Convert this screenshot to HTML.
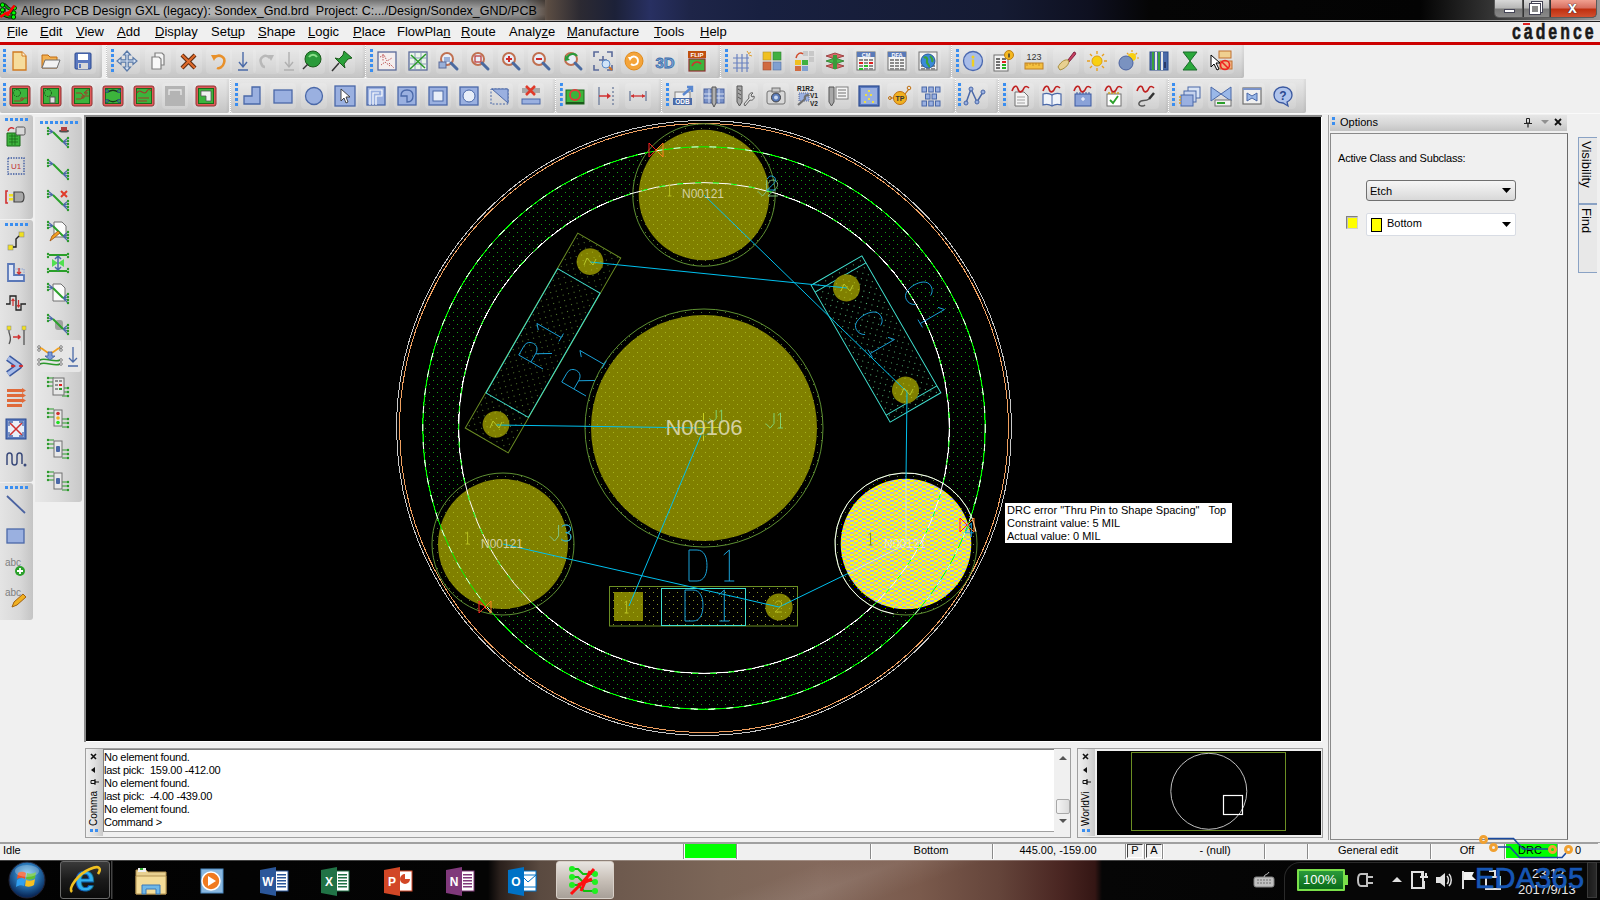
<!DOCTYPE html>
<html><head><meta charset="utf-8"><title>Allegro PCB Design</title>
<style>
*{margin:0;padding:0;box-sizing:border-box}
html,body{width:1600px;height:900px;overflow:hidden;background:#f0f0f0;font-family:"Liberation Sans",sans-serif;position:relative}
.a{position:absolute}
.t{position:absolute;white-space:nowrap;line-height:1}
.tb{position:absolute;border-radius:0 0 2px 2px;background:linear-gradient(#e8e8e8,#d8d8d8 50%,#c4c4c4);box-shadow:inset -2px 0 2px rgba(0,0,0,.05)}
.grip{position:absolute;width:3px;background:repeating-linear-gradient(#3a8ef0 0 3px,transparent 3px 5px)}
.griph{position:absolute;height:3px;background:repeating-linear-gradient(90deg,#3a8ef0 0 3px,transparent 3px 5px)}
.sep{position:absolute;width:1px;background:repeating-linear-gradient(#fff 0 1px,#c8c8c8 1px 2px)}
svg{position:absolute;overflow:visible}
</style></head><body>

<div class="a" style="left:0;top:0;width:1600px;height:21px;background:linear-gradient(90deg,#8a8a8a 0px,#a8a8a8 60px,#b4b4b4 200px,#aaaaaa 420px,#909090 525px,#5a4c42 548px,#2c2a32 580px,#1c2138 615px,#283062 650px,#1e2548 690px,#182040 760px,#151b33 1000px,#0e1020 1090px,#050505 1150px,#030303 1420px,#3a3a3a 1500px,#9a9a9a 1600px)"></div>
<div class="a" style="left:0;top:0;width:545px;height:21px;background:linear-gradient(rgba(0,0,0,.35),rgba(0,0,0,0) 40%,rgba(0,0,0,0) 70%,rgba(0,0,0,.3))"></div>
<div class="a" style="left:0;top:20px;width:1600px;height:1px;background:rgba(255,255,255,.55)"></div>
<div class="a" style="left:0;top:21px;width:1600px;height:1px;background:#1a1a1a"></div>
<div class="a" style="left:0;top:22px;width:1600px;height:20px;background:#f0f0f0"></div>
<div class="a" style="left:0;top:42px;width:1600px;height:3px;background:#cc0000"></div>
<div class="a" style="left:84px;top:115px;width:1238px;height:627px;background:#fff;border-top:2px solid #8a8a8a;border-left:2px solid #8a8a8a"></div>
<div class="a" style="left:86px;top:117px;width:1235px;height:624px;background:#000"></div>
<div class="a" style="left:0;top:860px;width:1600px;height:40px;background:linear-gradient(90deg,#020202 0,#040404 488px,#2a201c 500px,#5a4a40 540px,#6e5a4e 620px,#7c6658 720px,#84695c 820px,#7a5a4c 920px,#64443a 1000px,#4a2622 1060px,#341614 1095px,#060606 1102px,#020202 1600px)"></div>
<div class="a" style="left:0;top:860px;width:1600px;height:1px;background:rgba(255,255,255,.25)"></div>
<div class="a" style="left:500px;top:861px;width:700px;height:39px;background:linear-gradient(160deg,rgba(255,255,255,0) 40%,rgba(255,255,255,.08) 50%,rgba(255,255,255,0) 60%)"></div>
<div class="a" style="left:1284px;top:862px;width:316px;height:38px;border-radius:16px 0 0 0;background:#060606;border-top:1px solid #2a2a2a;border-left:1px solid #2a2a2a"></div>
<svg style="left:8px;top:861px" width="38" height="38" viewBox="0 0 38 38">
<defs><radialGradient id="orb" cx="50%" cy="35%" r="60%"><stop offset="0" stop-color="#7ac8f0"/><stop offset=".5" stop-color="#2a78b8"/><stop offset="1" stop-color="#0a2a5a"/></radialGradient></defs>
<circle cx="19" cy="19" r="18" fill="url(#orb)" stroke="#223" stroke-width="1"/>
<path d="M10 12 C13 10 16 11 18 12 L17 18 C15 17 12 16 9 18 Z" fill="#f05020"/>
<path d="M19 12 C22 13 25 13 28 11 L27 17 C24 19 21 19 18 18 Z" fill="#60c030"/>
<path d="M9 19 C12 17 15 18 17 19 L16 25 C14 24 11 24 8 26 Z" fill="#30a0f0"/>
<path d="M18 19 C21 20 24 20 27 18 L26 24 C23 26 20 26 17 25 Z" fill="#f8c020"/>
<ellipse cx="19" cy="10" rx="12" ry="6" fill="rgba(255,255,255,.25)"/>
</svg>
<div class="a" style="left:60px;top:861px;width:50px;height:38px;border:1px solid #6a6a6a;border-radius:3px;background:linear-gradient(#3a3a3a,#1a1a1a 50%,#0a0a0a)"></div>
<div class="a" style="left:111px;top:861px;width:2px;height:38px;border-left:1px solid #444;border-right:1px solid #222"></div>
<svg style="left:66px;top:862px" width="38" height="36" viewBox="0 0 38 36">
<text x="19" y="29" font-size="36" font-weight="bold" fill="#30b0f0" stroke="#0a5aa0" stroke-width=".8" text-anchor="middle" font-family="Liberation Sans">e</text>
<path d="M6 30 C2 26 12 12 24 7 C33 3 36 6 32 12" stroke="#f0c020" stroke-width="2.6" fill="none"/></svg>
<svg style="left:134px;top:866px" width="34" height="30" viewBox="0 0 34 30">
<path d="M2 4 H12 L14 6 H32 V28 H2 Z" fill="#e8d090" stroke="#b09050"/><rect x="4" y="2" width="8" height="4" fill="#f0f0f0"/><rect x="6" y="2" width="3" height="2" fill="#30b030"/><path d="M2 10 H32 V28 H2 Z" fill="#f4dc98" stroke="#b09050"/><path d="M8 28 V19 H26 V28 H22 V23 H12 V28 Z" fill="#70b8e8" stroke="#3a78b8"/></svg>
<svg style="left:197px;top:866px" width="30" height="30" viewBox="0 0 30 30">
<rect x="4" y="3" width="22" height="24" fill="#8ab8e0" stroke="#4a88c0"/><circle cx="14" cy="15" r="9" fill="#f07a20" stroke="#fff" stroke-width="1.5"/><path d="M11 10 L19 15 L11 20 Z" fill="#fff"/></svg>
<svg style="left:259px;top:866px" width="32" height="31" viewBox="0 0 32 31">
<rect x="12" y="5" width="17" height="20" fill="#fff" stroke="#2b579a"/><rect x="18" y="8" width="9" height="1.5" fill="#2b579a"/><rect x="18" y="11" width="9" height="1.5" fill="#2b579a"/><rect x="18" y="14" width="9" height="1.5" fill="#2b579a"/><rect x="18" y="17" width="9" height="1.5" fill="#2b579a"/><rect x="18" y="20" width="9" height="1.5" fill="#2b579a"/>
<path d="M1 4 L17 1 V30 L1 27 Z" fill="#2b579a"/><text x="9" y="20" font-size="12" font-weight="bold" fill="#fff" text-anchor="middle" font-family="Liberation Sans">W</text></svg>
<svg style="left:320px;top:866px" width="32" height="31" viewBox="0 0 32 31">
<rect x="12" y="5" width="17" height="20" fill="#fff" stroke="#217346"/><rect x="18" y="8" width="9" height="1.5" fill="#217346"/><rect x="18" y="11" width="9" height="1.5" fill="#217346"/><rect x="18" y="14" width="9" height="1.5" fill="#217346"/><rect x="18" y="17" width="9" height="1.5" fill="#217346"/><rect x="18" y="20" width="9" height="1.5" fill="#217346"/>
<path d="M1 4 L17 1 V30 L1 27 Z" fill="#217346"/><text x="9" y="20" font-size="12" font-weight="bold" fill="#fff" text-anchor="middle" font-family="Liberation Sans">X</text></svg>
<svg style="left:383px;top:866px" width="32" height="31" viewBox="0 0 32 31">
<rect x="12" y="5" width="17" height="20" fill="#fff" stroke="#d24726"/><path d="M22 8 A5 5 0 1 0 27 13 H22Z" fill="#d24726"/>
<path d="M1 4 L17 1 V30 L1 27 Z" fill="#d24726"/><text x="9" y="20" font-size="12" font-weight="bold" fill="#fff" text-anchor="middle" font-family="Liberation Sans">P</text></svg>
<svg style="left:445px;top:866px" width="32" height="31" viewBox="0 0 32 31">
<rect x="12" y="5" width="17" height="20" fill="#fff" stroke="#80397b"/><rect x="18" y="8" width="9" height="1.5" fill="#80397b"/><rect x="18" y="11" width="9" height="1.5" fill="#80397b"/><rect x="18" y="14" width="9" height="1.5" fill="#80397b"/><rect x="18" y="17" width="9" height="1.5" fill="#80397b"/><rect x="18" y="20" width="9" height="1.5" fill="#80397b"/>
<path d="M1 4 L17 1 V30 L1 27 Z" fill="#80397b"/><text x="9" y="20" font-size="12" font-weight="bold" fill="#fff" text-anchor="middle" font-family="Liberation Sans">N</text></svg>
<svg style="left:507px;top:866px" width="32" height="31" viewBox="0 0 32 31">
<rect x="12" y="5" width="17" height="20" fill="#fff" stroke="#0072c6"/><rect x="14" y="9" width="15" height="12" fill="#fff" stroke="#0072c6"/><path d="M14 9 L21 16 L29 9" stroke="#0072c6" fill="none"/>
<path d="M1 4 L17 1 V30 L1 27 Z" fill="#0072c6"/><text x="9" y="20" font-size="12" font-weight="bold" fill="#fff" text-anchor="middle" font-family="Liberation Sans">O</text></svg>
<div class="a" style="left:556px;top:861px;width:58px;height:38px;border:1px solid #d8d0c8;border-radius:3px;background:linear-gradient(#e8e4e0,#c8c0b8 50%,#a8a098)"></div>
<svg style="left:568px;top:865px" width="34" height="32" viewBox="0 0 34 32">
<path d="M3 4 H10 L15 9 H24 M3 12 H10 L14 16 H26 M3 20 H10 L16 26 H26 M20 9 L26 5" stroke="#10c010" stroke-width="2" fill="none"/>
<g fill="#20f020"><circle cx="4" cy="4" r="3"/><circle cx="4" cy="12" r="3"/><circle cx="4" cy="20" r="3"/><circle cx="27" cy="9" r="3"/><circle cx="27" cy="17" r="3"/><circle cx="27" cy="26" r="3"/></g>
<path d="M3 29 L14 18 L26 4 M10 20 L24 14 M13 26 L22 6" stroke="#ff1010" stroke-width="3" fill="none"/></svg>
<svg style="left:1253px;top:872px" width="22" height="16" viewBox="0 0 22 16"><rect x="1" y="5" width="20" height="10" rx="2" fill="#c0c0c0" stroke="#808080"/><path d="M4 8 H18 M4 11 H18" stroke="#707070" stroke-dasharray="2 1"/><path d="M11 5 C11 2 15 3 16 0" stroke="#c0c0c0" fill="none"/></svg>
<div class="a" style="left:1297px;top:869px;width:48px;height:22px;border:2px solid #7ae04a;background:linear-gradient(#2a9a3a,#0a6a1a);border-radius:1px"></div>
<div class="a" style="left:1345px;top:875px;width:3px;height:10px;background:#7ae04a"></div>
<div class="t" style="left:1303px;top:873px;font-size:13px;color:#fff">100%</div>
<svg style="left:1355px;top:871px" width="20" height="18" viewBox="0 0 20 18"><path d="M12 3 H6 C2 3 2 15 6 15 H12 Z M12 6 H18 M12 12 H18" stroke="#c0c0c0" stroke-width="2" fill="none"/></svg>
<svg style="left:1391px;top:875px" width="12" height="8" viewBox="0 0 12 8"><path d="M1 7 L6 2 L11 7 Z" fill="#e0e0e0"/></svg>
<svg style="left:1410px;top:869px" width="20" height="22" viewBox="0 0 20 22"><rect x="2" y="3" width="11" height="16" fill="none" stroke="#e0e0e0" stroke-width="2"/><path d="M10 8 H18 M12 4 V8 M16 4 V8 M14 12 V20" stroke="#e0e0e0" stroke-width="2"/></svg>
<svg style="left:1434px;top:870px" width="20" height="20" viewBox="0 0 20 20"><path d="M2 7 H6 L11 3 V17 L6 13 H2 Z" fill="#e0e0e0"/><path d="M13 6 C15 8 15 12 13 14 M15 4 C18 7 18 13 15 16" stroke="#e0e0e0" stroke-width="1.5" fill="none"/></svg>
<svg style="left:1460px;top:869px" width="20" height="22" viewBox="0 0 20 22"><path d="M3 2 V20" stroke="#e0e0e0" stroke-width="2"/><path d="M4 3 H14 L12 7 L16 11 H4 Z" fill="#f0f0f0"/></svg>
<svg style="left:1483px;top:869px" width="22" height="22" viewBox="0 0 22 22"><rect x="3" y="8" width="14" height="12" fill="none" stroke="#e0e0e0" stroke-width="2"/><path d="M6 2 H12 V8" stroke="#e0e0e0" stroke-width="2" fill="none"/></svg>
<div class="t" style="left:1532px;top:867px;font-size:13px;color:#e8e8e8">23:12</div>
<div class="t" style="left:1518px;top:883px;font-size:13px;color:#e8e8e8">2017/9/13</div>
<div class="a" style="left:1587px;top:862px;width:10px;height:36px;border:1px solid #3a3a3a;background:linear-gradient(90deg,#1a1a1a,#2a2a2a)"></div>
<div class="a" style="left:1328px;top:115px;width:1px;height:725px;background:#a0a0a0"></div>
<div class="a" style="left:1330px;top:115px;width:237px;height:16px;background:linear-gradient(#e6e6e6,#d8d8d8 50%,#c4c4c4)"></div>
<div class="a" style="left:1332px;top:117px;width:3px;height:3px;background:#3a8ef0"></div><div class="a" style="left:1332px;top:122px;width:3px;height:3px;background:#3a8ef0"></div>
<div class="t" style="left:1340px;top:117px;font-size:11px;color:#000">Options</div>
<svg style="left:1523px;top:117px" width="10" height="11" viewBox="0 0 10 11"><path d="M3.5 1.5 H6.5 V6 H3.5 Z" stroke="#222" stroke-width="1" fill="none"/><path d="M1 6.5 H9 M5 6.5 V10.5" stroke="#222" stroke-width="1.2" fill="none"/></svg>
<svg style="left:1540px;top:119px" width="10" height="6" viewBox="0 0 10 6"><path d="M1 1 H9 L5 5 Z" fill="#909090"/></svg>
<svg style="left:1553px;top:117px" width="10" height="10" viewBox="0 0 10 10"><path d="M2 2 L8 8 M8 2 L2 8" stroke="#111" stroke-width="1.8"/></svg>
<div class="a" style="left:1330px;top:133px;width:238px;height:707px;border:1px solid #8a8a8a;border-right-color:#6a6a6a;background:#f0f0f0"></div>
<div class="t" style="left:1338px;top:153px;font-size:11px;letter-spacing:-0.2px;color:#000">Active Class and Subclass:</div>
<div class="a" style="left:1366px;top:180px;width:150px;height:21px;border:1px solid #707070;border-radius:3px;background:linear-gradient(#f6f6f6,#e8e8e8 50%,#d8d8d8)"></div>
<div class="t" style="left:1370px;top:186px;font-size:11px;color:#000">Etch</div>
<svg style="left:1502px;top:188px" width="9" height="5" viewBox="0 0 9 5"><path d="M0 0 H9 L4.5 5 Z" fill="#000"/></svg>
<div class="a" style="left:1346px;top:216px;width:12px;height:13px;border:1px solid #808080;border-right-color:#d0d0d0;border-bottom-color:#d0d0d0;background:#ffff00;box-shadow:inset 1px 1px 0 #c0c0c0"></div>
<div class="a" style="left:1366px;top:213px;width:150px;height:23px;border:1px solid #d8dce4;border-radius:2px;background:#fff"></div>
<div class="a" style="left:1371px;top:218px;width:11px;height:14px;border:1px solid #000;background:#ffff00"></div>
<div class="t" style="left:1387px;top:218px;font-size:11px;color:#000">Bottom</div>
<svg style="left:1502px;top:222px" width="9" height="5" viewBox="0 0 9 5"><path d="M0 0 H9 L4.5 5 Z" fill="#000"/></svg>
<div class="a" style="left:1578px;top:137px;width:19px;height:136px;border:1px solid #8aa2c4;border-right:none;background:#e8e8e8"></div>
<div class="a" style="left:1578px;top:203px;width:19px;height:2px;background:#8aa2c4"></div>
<div class="t" style="left:1577px;top:141px;font-size:13px;color:#000;transform-origin:0 0;transform:translate(16px,0) rotate(90deg)">Visibility</div>
<div class="t" style="left:1577px;top:208px;font-size:13px;color:#000;transform-origin:0 0;transform:translate(16px,0) rotate(90deg)">Find</div>
<div class="a" style="left:85px;top:748px;width:986px;height:90px;border:1px solid #a0a0a0;background:#f0f0f0"></div>
<div class="a" style="left:86px;top:749px;width:17px;height:87px;background:linear-gradient(90deg,#f0f0f0,#e0e0e0 50%,#c8c8c8)"></div>
<svg style="left:88px;top:752px" width="12" height="84" viewBox="0 0 12 84"><path d="M3 2 L8 7 M8 2 L3 7" stroke="#111" stroke-width="1.6"/><path d="M7 15 V21 L3 18 Z" fill="#111"/><path d="M7 28.5 V31.5 H3 V28.5 Z M7 27 V33 M7 30 H11" stroke="#111" stroke-width="1" fill="none"/><rect x="2" y="77" width="3" height="3" fill="#3a8ef0"/><rect x="7" y="77" width="3" height="3" fill="#3a8ef0"/></svg>
<div class="t" style="left:89px;top:826px;font-size:10px;color:#000;transform-origin:0 0;transform:rotate(-90deg)">Comma</div>
<div class="a" style="left:103px;top:749px;width:951px;height:83px;background:#fff;border-top:1px solid #808080;border-left:1px solid #808080;border-bottom:1px solid #a0a0a0"></div>
<div class="t" style="left:104px;top:752px;font-size:11px;letter-spacing:-0.25px;color:#000">No element found.</div>
<div class="t" style="left:104px;top:765px;font-size:11px;letter-spacing:-0.25px;color:#000">last pick:&nbsp; 159.00 -412.00</div>
<div class="t" style="left:104px;top:778px;font-size:11px;letter-spacing:-0.25px;color:#000">No element found.</div>
<div class="t" style="left:104px;top:791px;font-size:11px;letter-spacing:-0.25px;color:#000">last pick:&nbsp; -4.00 -439.00</div>
<div class="t" style="left:104px;top:804px;font-size:11px;letter-spacing:-0.25px;color:#000">No element found.</div>
<div class="t" style="left:104px;top:817px;font-size:11px;letter-spacing:-0.25px;color:#000">Command &gt;</div>
<svg style="left:1056px;top:753px" width="14" height="76" viewBox="0 0 14 76"><path d="M3 7 L7 3 L11 7 Z" fill="#555"/><path d="M3 66 L7 70 L11 66 Z" fill="#555"/></svg>
<div class="a" style="left:1056px;top:799px;width:14px;height:15px;border:1px solid #a8a8a8;border-radius:2px;background:linear-gradient(90deg,#f4f4f4,#dcdcdc)"></div>
<div class="a" style="left:1077px;top:748px;width:246px;height:90px;border:1px solid #a0a0a0;background:#f0f0f0"></div>
<div class="a" style="left:1078px;top:749px;width:17px;height:87px;background:linear-gradient(90deg,#f0f0f0,#e0e0e0 50%,#c8c8c8)"></div>
<svg style="left:1080px;top:752px" width="12" height="84" viewBox="0 0 12 84"><path d="M3 2 L8 7 M8 2 L3 7" stroke="#111" stroke-width="1.6"/><path d="M7 15 V21 L3 18 Z" fill="#111"/><path d="M7 28.5 V31.5 H3 V28.5 Z M7 27 V33 M7 30 H11" stroke="#111" stroke-width="1" fill="none"/><rect x="2" y="77" width="3" height="3" fill="#3a8ef0"/><rect x="7" y="77" width="3" height="3" fill="#3a8ef0"/></svg>
<div class="t" style="left:1081px;top:826px;font-size:10px;color:#000;transform-origin:0 0;transform:rotate(-90deg)">WorldVi</div>
<svg style="left:1097px;top:751px" width="224" height="84" viewBox="1097 751 224 84"><rect x="1097" y="751" width="224" height="84" fill="#000"/><rect x="1131.5" y="752.5" width="154" height="78" fill="none" stroke="#6b8e23"/><circle cx="1208.8" cy="791.3" r="38" fill="none" stroke="#c0c0c0"/><rect x="1223.5" y="795.5" width="19" height="19" fill="none" stroke="#fff" stroke-width="1.2"/></svg>
<div class="a" style="left:0;top:842px;width:1600px;height:1px;background:#a0a0a0"></div>
<div class="a" style="left:0;top:843px;width:1600px;height:17px;background:#f0f0f0"></div>
<div class="a" style="left:683px;top:844px;width:2px;height:15px;border-left:1px solid #8a8a8a;border-right:1px solid #fff"></div>
<div class="a" style="left:736px;top:844px;width:2px;height:15px;border-left:1px solid #8a8a8a;border-right:1px solid #fff"></div>
<div class="a" style="left:870px;top:844px;width:2px;height:15px;border-left:1px solid #8a8a8a;border-right:1px solid #fff"></div>
<div class="a" style="left:992px;top:844px;width:2px;height:15px;border-left:1px solid #8a8a8a;border-right:1px solid #fff"></div>
<div class="a" style="left:1125px;top:844px;width:2px;height:15px;border-left:1px solid #8a8a8a;border-right:1px solid #fff"></div>
<div class="a" style="left:1144px;top:844px;width:2px;height:15px;border-left:1px solid #8a8a8a;border-right:1px solid #fff"></div>
<div class="a" style="left:1162px;top:844px;width:2px;height:15px;border-left:1px solid #8a8a8a;border-right:1px solid #fff"></div>
<div class="a" style="left:1264px;top:844px;width:2px;height:15px;border-left:1px solid #8a8a8a;border-right:1px solid #fff"></div>
<div class="a" style="left:1307px;top:844px;width:2px;height:15px;border-left:1px solid #8a8a8a;border-right:1px solid #fff"></div>
<div class="a" style="left:1430px;top:844px;width:2px;height:15px;border-left:1px solid #8a8a8a;border-right:1px solid #fff"></div>
<div class="a" style="left:1504px;top:844px;width:2px;height:15px;border-left:1px solid #8a8a8a;border-right:1px solid #fff"></div>
<div class="a" style="left:1557px;top:844px;width:2px;height:15px;border-left:1px solid #8a8a8a;border-right:1px solid #fff"></div>
<div class="a" style="left:0;top:843px;width:1598px;height:1px;background:#a0a0a0"></div>
<div class="a" style="left:685px;top:844px;width:51px;height:14px;background:#00ff00"></div>
<div class="a" style="left:1506px;top:844px;width:51px;height:14px;background:#00ff00"></div>
<div class="a" style="left:1127px;top:844px;width:16px;height:14px;border:1px solid #404040;border-right-color:#fff;border-bottom-color:#fff"></div>
<div class="a" style="left:1146px;top:844px;width:16px;height:14px;border:1px solid #404040;border-right-color:#fff;border-bottom-color:#fff"></div>
<div class="t" style="left:3px;top:845px;font-size:11px;color:#000">Idle</div>
<div class="t" style="left:831px;width:200px;text-align:center;top:845px;font-size:11px;color:#000">Bottom</div>
<div class="t" style="left:958px;width:200px;text-align:center;top:845px;font-size:11px;color:#000">445.00, -159.00</div>
<div class="t" style="left:1035px;width:200px;text-align:center;top:845px;font-size:11px;color:#000">P</div>
<div class="t" style="left:1054px;width:200px;text-align:center;top:845px;font-size:11px;color:#000">A</div>
<div class="t" style="left:1115px;width:200px;text-align:center;top:845px;font-size:11px;color:#000">- (null)</div>
<div class="t" style="left:1268px;width:200px;text-align:center;top:845px;font-size:11px;color:#000">General edit</div>
<div class="t" style="left:1367px;width:200px;text-align:center;top:845px;font-size:11px;color:#000">Off</div>
<div class="t" style="left:1430px;width:200px;text-align:center;top:845px;font-size:11px;color:#000">DRC</div>
<div class="t" style="left:1575px;top:845px;font-size:11px;color:#000">0</div>
<svg style="left:0;top:1px" width="20" height="19" viewBox="0 0 20 19">
<path d="M2.5 4 H5 L8 7 L10 8 M2.5 9 H6 M2 13 L6 15 L9 16 H13.5 M14 7 L11 9 M13 12 H10" stroke="#000" stroke-width="3" fill="none"/>
<path d="M2.5 4 H5 L8 7 L10 8 M2.5 9 H6 M2 13 L6 15 L9 16 H13.5 M14 7 L11 9 M13 12 H10" stroke="#00b000" stroke-width="1.6" fill="none"/>
<g fill="#00ff00" stroke="#003000" stroke-width="1"><circle cx="2.5" cy="4" r="2.2"/><circle cx="2.5" cy="9" r="2.2"/><circle cx="2.5" cy="13" r="2"/><circle cx="14.5" cy="7" r="2"/><circle cx="13.8" cy="12" r="2.2"/><circle cx="13.5" cy="16" r="2.2"/></g>
<path d="M0.5 16 C3 14 5 12 8 11.5 L10 11 M7 15 C9 11 12 8 14.5 4.5" stroke="#ff0000" stroke-width="2.6" fill="none"/>
</svg>
<div class="t" style="left:21px;top:5px;font-size:12.5px;color:#000;letter-spacing:0px" id="ttl">Allegro PCB Design GXL (legacy): Sondex_Gnd.brd &nbsp;Project: C:.../Design/Sondex_GND/PCB</div>
<div class="a" style="left:1494px;top:0;width:103px;height:18px;border:1px solid #5a5a5a;border-top:none;border-radius:0 0 5px 5px;overflow:hidden;background:#333">
<div class="a" style="left:0;top:0;width:28px;height:17px;background:linear-gradient(#d8d8d8,#b8b8b8 45%,#7a7a7a 55%,#8a8a8a);border-right:1px solid #555"></div>
<div class="a" style="left:29px;top:0;width:26px;height:17px;background:linear-gradient(#d8d8d8,#b8b8b8 45%,#7a7a7a 55%,#8a8a8a);border-right:1px solid #555"></div>
<div class="a" style="left:56px;top:0;width:47px;height:17px;background:linear-gradient(#f0a090,#d87060 45%,#c03010 55%,#d05030)"></div>
<div class="a" style="left:9px;top:9px;width:11px;height:4px;background:#fff;border:1px solid #445"></div>
<div class="a" style="left:37px;top:2px;width:10px;height:10px;border:2px solid #fff;outline:1px solid #445"></div>
<div class="a" style="left:35px;top:4px;width:10px;height:10px;border:2px solid #fff;background:#888;outline:1px solid #445"></div>
<div class="t" style="left:73px;top:0px;font-size:16px;font-weight:bold;color:#fff;text-shadow:0 0 1px #223,0 0 1px #223">x</div>
</div>
<div class="t" style="left:7px;top:25px;font-size:13px;color:#000"><u>F</u>ile</div>
<div class="t" style="left:40px;top:25px;font-size:13px;color:#000"><u>E</u>dit</div>
<div class="t" style="left:76px;top:25px;font-size:13px;color:#000"><u>V</u>iew</div>
<div class="t" style="left:117px;top:25px;font-size:13px;color:#000"><u>A</u>dd</div>
<div class="t" style="left:155px;top:25px;font-size:13px;color:#000"><u>D</u>isplay</div>
<div class="t" style="left:211px;top:25px;font-size:13px;color:#000">Set<u>u</u>p</div>
<div class="t" style="left:258px;top:25px;font-size:13px;color:#000"><u>S</u>hape</div>
<div class="t" style="left:308px;top:25px;font-size:13px;color:#000"><u>L</u>ogic</div>
<div class="t" style="left:353px;top:25px;font-size:13px;color:#000"><u>P</u>lace</div>
<div class="t" style="left:397px;top:25px;font-size:13px;color:#000">FlowPla<u>n</u></div>
<div class="t" style="left:461px;top:25px;font-size:13px;color:#000"><u>R</u>oute</div>
<div class="t" style="left:509px;top:25px;font-size:13px;color:#000">Analy<u>z</u>e</div>
<div class="t" style="left:567px;top:25px;font-size:13px;color:#000"><u>M</u>anufacture</div>
<div class="t" style="left:654px;top:25px;font-size:13px;color:#000"><u>T</u>ools</div>
<div class="t" style="left:700px;top:25px;font-size:13px;color:#000"><u>H</u>elp</div>
<div class="t" style="left:1512px;top:21px;font-size:22px;font-weight:bold;color:#1a1a1a;letter-spacing:4.2px;-webkit-text-stroke:0.6px #1a1a1a;transform-origin:0 0;transform:scaleX(0.72)">cadence</div>
<div class="a" style="left:1523px;top:23px;width:7px;height:2px;background:#e02020"></div>
<div class="tb" style="left:0px;top:45px;width:102px;height:33px"></div>
<div class="grip" style="left:3px;top:49px;height:23px"></div>
<div class="a" style="left:6px;top:48px;width:26px;height:26px;border-radius:4px;background:rgba(255,255,255,.14)"></div>
<svg style="left:7.0px;top:49.0px" width="24" height="24" viewBox="0 0 24 24"><path d="M6 3 H15 L19 7 V21 H6 Z" fill="#f6dc9c" stroke="#d07a20" stroke-width="1.3"/><path d="M15 3 V7 H19" fill="#fff4d8" stroke="#d07a20"/></svg>
<div class="a" style="left:38px;top:48px;width:26px;height:26px;border-radius:4px;background:rgba(255,255,255,.14)"></div>
<svg style="left:39.0px;top:49.0px" width="24" height="24" viewBox="0 0 24 24"><path d="M3 6 H9 L11 8 H18 V19 H3 Z" fill="#f3b050" stroke="#c06a10"/><path d="M6 11 H21 L18 19 H3 Z" fill="#f2f2f2" stroke="#707070"/></svg>
<div class="a" style="left:70px;top:48px;width:26px;height:26px;border-radius:4px;background:rgba(255,255,255,.14)"></div>
<svg style="left:71.0px;top:49.0px" width="24" height="24" viewBox="0 0 24 24"><rect x="4" y="4" width="16" height="16" rx="1" fill="#5a78c0" stroke="#2a4890"/><rect x="7" y="5" width="10" height="6" fill="#fff"/><rect x="7" y="14" width="10" height="6" fill="#d8d8d8"/><rect x="8" y="15" width="2" height="4" fill="#5a78c0"/></svg>
<div class="tb" style="left:107px;top:45px;width:258px;height:33px"></div>
<div class="grip" style="left:111px;top:49px;height:23px"></div>
<div class="sep" style="left:106px;top:45px;height:33px"></div>
<div class="a" style="left:114px;top:48px;width:26px;height:26px;border-radius:4px;background:rgba(255,255,255,.14)"></div>
<svg style="left:115.0px;top:49.0px" width="24" height="24" viewBox="0 0 24 24"><path d="M12 2 L15.5 6 H13.2 V10.8 H18 V8.5 L22 12 L18 15.5 V13.2 H13.2 V18 H15.5 L12 22 L8.5 18 H10.8 V13.2 H6 V15.5 L2 12 L6 8.5 V10.8 H10.8 V6 H8.5 Z" fill="#d8e4f4" stroke="#5a7aa8" stroke-width="1.2"/></svg>
<div class="a" style="left:145px;top:48px;width:26px;height:26px;border-radius:4px;background:rgba(255,255,255,.14)"></div>
<svg style="left:146.0px;top:49.0px" width="24" height="24" viewBox="0 0 24 24"><path d="M9 4 H16 L18 6 V16 H9 Z" fill="#f4f4f4" stroke="#808080" stroke-width="1.2"/><path d="M6 8 H13 L15 10 V20 H6 Z" fill="#f8f8f8" stroke="#808080" stroke-width="1.2"/></svg>
<div class="a" style="left:176px;top:48px;width:26px;height:26px;border-radius:4px;background:rgba(255,255,255,.14)"></div>
<svg style="left:177.0px;top:49.0px" width="24" height="24" viewBox="0 0 24 24"><path d="M5 6 L18 19 M18 6 L5 19" stroke="#5a2a10" stroke-width="4.2"/><path d="M5 6 L18 19 M18 6 L5 19" stroke="#e06a2a" stroke-width="2.2"/></svg>
<div class="a" style="left:206px;top:48px;width:26px;height:26px;border-radius:4px;background:rgba(255,255,255,.14)"></div>
<svg style="left:207.0px;top:49.0px" width="24" height="24" viewBox="0 0 24 24"><path d="M7 9 C12 4 19 8 17 14 C16 18 12 20 10 19" stroke="#e8902a" stroke-width="2.5" fill="none"/><path d="M4 6 L10 6 L7 12 Z" fill="#e8902a"/></svg>
<div class="a" style="left:230px;top:48px;width:26px;height:26px;border-radius:4px;background:rgba(255,255,255,.14)"></div>
<svg style="left:231.0px;top:49.0px" width="24" height="24" viewBox="0 0 24 24"><path d="M12 3 V17 M8 13 L12 18 L16 13 M7 21 H17" stroke="#4a6aa8" stroke-width="1.4" fill="none"/></svg>
<div class="a" style="left:253px;top:48px;width:26px;height:26px;border-radius:4px;background:rgba(255,255,255,.14)"></div>
<svg style="left:254.0px;top:49.0px" width="24" height="24" viewBox="0 0 24 24"><path d="M16 9 C11 4 5 9 7 14 C8 17 10 18 11 18" stroke="#b8b8b8" stroke-width="2.5" fill="none"/><path d="M20 6 L14 6 L17 12 Z" fill="#b8b8b8"/></svg>
<div class="a" style="left:276px;top:48px;width:26px;height:26px;border-radius:4px;background:rgba(255,255,255,.14)"></div>
<svg style="left:277.0px;top:49.0px" width="24" height="24" viewBox="0 0 24 24"><path d="M12 3 V17 M8 13 L12 18 L16 13 M7 21 H17" stroke="#b0b0b0" stroke-width="1.4" fill="none"/></svg>
<div class="a" style="left:299px;top:48px;width:26px;height:26px;border-radius:4px;background:rgba(255,255,255,.14)"></div>
<svg style="left:300.0px;top:49.0px" width="24" height="24" viewBox="0 0 24 24"><circle cx="13" cy="10" r="8" fill="#2a9a3a" stroke="#1a5a1a"/><path d="M9 8 C11 5 15 5 17 8" stroke="#8ae08a" stroke-width="2" fill="none"/><path d="M8 15 L3 20" stroke="#333" stroke-width="1.5"/></svg>
<div class="a" style="left:329px;top:48px;width:26px;height:26px;border-radius:4px;background:rgba(255,255,255,.14)"></div>
<svg style="left:330.0px;top:49.0px" width="24" height="24" viewBox="0 0 24 24"><path d="M14 2 L22 9 L18 10 L14 15 L15 19 L5 9 L9 10 L13 6 Z" fill="#2aa23a" stroke="#1a5a1a"/><path d="M9 14 L2 22" stroke="#333" stroke-width="1.5"/></svg>
<div class="tb" style="left:366px;top:45px;width:354px;height:33px"></div>
<div class="grip" style="left:370px;top:49px;height:23px"></div>
<div class="sep" style="left:365px;top:45px;height:33px"></div>
<div class="a" style="left:374px;top:48px;width:26px;height:26px;border-radius:4px;background:rgba(255,255,255,.14)"></div>
<svg style="left:375.0px;top:49.0px" width="24" height="24" viewBox="0 0 24 24"><rect x="3" y="3" width="18" height="18" fill="#f4eeee" stroke="#5a6a9a" stroke-width="1.3"/><path d="M5 8 L9 6 L12 12 L17 9 M6 16 L10 13 L15 17 M8 5 V12 M14 14 L19 19" fill="none" stroke="#c05a5a" stroke-width="1" stroke-dasharray="1.5 1"/></svg>
<div class="a" style="left:405px;top:48px;width:26px;height:26px;border-radius:4px;background:rgba(255,255,255,.14)"></div>
<svg style="left:406.0px;top:49.0px" width="24" height="24" viewBox="0 0 24 24"><rect x="3" y="3" width="18" height="18" fill="#eaf4ea" stroke="#5a6a9a" stroke-width="1.3"/><path d="M3 9 H21 M3 15 H21 M9 3 V21 M15 3 V21" stroke="#8a9ab8"/><path d="M4 20 L20 5 M5 6 L19 19" stroke="#2a9a2a" stroke-width="1.5"/></svg>
<div class="a" style="left:436px;top:48px;width:26px;height:26px;border-radius:4px;background:rgba(255,255,255,.14)"></div>
<svg style="left:437.0px;top:49.0px" width="24" height="24" viewBox="0 0 24 24"><circle cx="10" cy="10" r="6" fill="#e8eef8" stroke="#c07050" stroke-width="2"/><rect x="7" y="8" width="6" height="5" fill="#9ab0d8"/><path d="M14 14 L20 20" stroke="#4a6aa0" stroke-width="3" stroke-linecap="round"/><rect x="2" y="13" width="7" height="6" fill="#9ab0d8" stroke="#5a6a9a"/></svg>
<div class="a" style="left:467px;top:48px;width:26px;height:26px;border-radius:4px;background:rgba(255,255,255,.14)"></div>
<svg style="left:468.0px;top:49.0px" width="24" height="24" viewBox="0 0 24 24"><circle cx="10" cy="10" r="6" fill="#e8eef8" stroke="#c07050" stroke-width="2"/><rect x="7" y="7" width="6" height="6" fill="none" stroke="#c04040" stroke-width="1.3"/><path d="M14 14 L20 20" stroke="#4a6aa0" stroke-width="3" stroke-linecap="round"/></svg>
<div class="a" style="left:498px;top:48px;width:26px;height:26px;border-radius:4px;background:rgba(255,255,255,.14)"></div>
<svg style="left:499.0px;top:49.0px" width="24" height="24" viewBox="0 0 24 24"><circle cx="10" cy="10" r="6" fill="#e8eef8" stroke="#c07050" stroke-width="2"/><path d="M7 10 H13 M10 7 V13" stroke="#d02a2a" stroke-width="2"/><path d="M14 14 L20 20" stroke="#4a6aa0" stroke-width="3" stroke-linecap="round"/></svg>
<div class="a" style="left:528px;top:48px;width:26px;height:26px;border-radius:4px;background:rgba(255,255,255,.14)"></div>
<svg style="left:529.0px;top:49.0px" width="24" height="24" viewBox="0 0 24 24"><circle cx="10" cy="10" r="6" fill="#e8eef8" stroke="#c07050" stroke-width="2"/><path d="M7 10 H13" stroke="#d02a2a" stroke-width="2"/><path d="M14 14 L20 20" stroke="#4a6aa0" stroke-width="3" stroke-linecap="round"/></svg>
<div class="a" style="left:560px;top:48px;width:26px;height:26px;border-radius:4px;background:rgba(255,255,255,.14)"></div>
<svg style="left:561.0px;top:49.0px" width="24" height="24" viewBox="0 0 24 24"><circle cx="10" cy="10" r="6" fill="#e8eef8" stroke="#c07050" stroke-width="2"/><path d="M6 9 C8 4 14 4 16 7" stroke="#2a9a3a" stroke-width="2.2" fill="none"/><path d="M4 6 L9 11 L4 12Z" fill="#2a9a3a"/><path d="M14 14 L20 20" stroke="#4a6aa0" stroke-width="3" stroke-linecap="round"/></svg>
<div class="a" style="left:590px;top:48px;width:26px;height:26px;border-radius:4px;background:rgba(255,255,255,.14)"></div>
<svg style="left:591.0px;top:49.0px" width="24" height="24" viewBox="0 0 24 24"><path d="M3 8 V3 H8 M16 3 H21 V8 M21 16 V21 H16 M8 21 H3 V16" stroke="#5a6a9a" stroke-width="1.6" fill="none"/><path d="M12 7 V15 M8 11 H16" stroke="#5a6a9a" stroke-width="1.6"/><circle cx="15" cy="15" r="4" fill="#d0e4f8" stroke="#5a8ac8"/><path d="M18 18 L21 21" stroke="#d07020" stroke-width="2"/></svg>
<div class="a" style="left:621px;top:48px;width:26px;height:26px;border-radius:4px;background:rgba(255,255,255,.14)"></div>
<svg style="left:622.0px;top:49.0px" width="24" height="24" viewBox="0 0 24 24"><circle cx="12" cy="12" r="9" fill="#f4a43a" stroke="#e08a1a"/><path d="M8 10 C10 6 16 7 16 12 C16 16 11 17 9 15" stroke="#fff" stroke-width="1.8" fill="none"/><path d="M6 8 L10 8 L8 12Z" fill="#fff"/></svg>
<div class="a" style="left:652px;top:48px;width:26px;height:26px;border-radius:4px;background:rgba(255,255,255,.14)"></div>
<svg style="left:653.0px;top:49.0px" width="24" height="24" viewBox="0 0 24 24"><text x="12" y="19" font-size="15" font-weight="bold" fill="#7aa8d8" stroke="#3a6aa8" stroke-width="0.8" text-anchor="middle" font-family="Liberation Sans">3D</text></svg>
<div class="a" style="left:684px;top:48px;width:26px;height:26px;border-radius:4px;background:rgba(255,255,255,.14)"></div>
<svg style="left:685.0px;top:49.0px" width="24" height="24" viewBox="0 0 24 24"><rect x="3" y="2" width="18" height="7" fill="#c05010"/><text x="12" y="8" font-size="6" font-weight="bold" fill="#fff" text-anchor="middle" font-family="Liberation Sans">FLIP</text><rect x="4" y="10" width="16" height="12" fill="#3cb43c" stroke="#903030" stroke-width="1.2"/><path d="M7 17 C9 12 14 12 16 15" stroke="#d03030" stroke-width="1.5" fill="none"/></svg>
<div class="tb" style="left:721px;top:45px;width:230px;height:33px"></div>
<div class="grip" style="left:725px;top:49px;height:23px"></div>
<div class="sep" style="left:720px;top:45px;height:33px"></div>
<div class="a" style="left:728px;top:48px;width:26px;height:26px;border-radius:4px;background:rgba(255,255,255,.14)"></div>
<svg style="left:729.0px;top:49.0px" width="24" height="24" viewBox="0 0 24 24"><path d="M4 9 H20 M4 14 H20 M4 19 H20 M8 5 V23 M13 5 V23 M18 5 V23" stroke="#6a82c0" stroke-width="1.2"/><path d="M18 2 L20 5 M22 3 L19 5 M23 7 L20 6" stroke="#e0a030"/></svg>
<div class="a" style="left:759px;top:48px;width:26px;height:26px;border-radius:4px;background:rgba(255,255,255,.14)"></div>
<svg style="left:760.0px;top:49.0px" width="24" height="24" viewBox="0 0 24 24"><rect x="3" y="3" width="8" height="8" fill="#f0c020" stroke="#b09030" stroke-width=".6"/><rect x="13" y="3" width="8" height="8" fill="#40b040" stroke="#308030" stroke-width=".6"/><rect x="3" y="13" width="8" height="8" fill="#d06a40" stroke="#a04a30" stroke-width=".6"/><rect x="13" y="13" width="8" height="8" fill="#80a0d0" stroke="#5070a0" stroke-width=".6"/></svg>
<div class="a" style="left:790px;top:48px;width:26px;height:26px;border-radius:4px;background:rgba(255,255,255,.14)"></div>
<svg style="left:791.0px;top:49.0px" width="24" height="24" viewBox="0 0 24 24"><rect x="12" y="2" width="5" height="5" fill="#c8c8c8"/><rect x="18" y="2" width="5" height="5" fill="#c8c8c8"/><rect x="18" y="8" width="5" height="5" fill="#c8c8c8"/><rect x="4" y="11" width="6" height="5" fill="#f0c020"/><rect x="11" y="11" width="6" height="5" fill="#40b040"/><rect x="4" y="17" width="6" height="5" fill="#d06a40"/><rect x="11" y="17" width="6" height="5" fill="#80a0d0"/><path d="M5 9 C6 4 10 3 12 5" stroke="#d04a2a" stroke-width="1.5" fill="none"/></svg>
<div class="a" style="left:822px;top:48px;width:26px;height:26px;border-radius:4px;background:rgba(255,255,255,.14)"></div>
<svg style="left:823.0px;top:49.0px" width="24" height="24" viewBox="0 0 24 24"><path d="M3 7 L12 4 L21 7 L12 10Z" fill="#d86a6a" stroke="#903030" stroke-width=".8"/><path d="M3 12 L12 9 L21 12 L12 15Z" fill="#4ab84a" stroke="#2a7a2a" stroke-width=".8"/><path d="M3 17 L12 14 L21 17 L12 20Z" fill="#d86a6a" stroke="#903030" stroke-width=".8"/><rect x="10" y="6" width="4" height="14" fill="#3a9a3a"/></svg>
<div class="a" style="left:853px;top:48px;width:26px;height:26px;border-radius:4px;background:rgba(255,255,255,.14)"></div>
<svg style="left:854.0px;top:49.0px" width="24" height="24" viewBox="0 0 24 24"><rect x="3" y="3" width="18" height="18" fill="#f4f4f4" stroke="#707070"/><rect x="3" y="3" width="18" height="5" fill="#5a7ab8"/><text x="12" y="7.6" font-size="5.5" font-weight="bold" fill="#fff" text-anchor="middle" font-family="Liberation Sans">CM</text><rect x="5" y="10" width="4" height="2" fill="#8a8a8a"/><rect x="10" y="10" width="4" height="2" fill="#8a8a8a"/><rect x="15" y="10" width="4" height="2" fill="#8a8a8a"/><rect x="5" y="13" width="4" height="2" fill="#8a8a8a"/><rect x="10" y="13" width="4" height="2" fill="#8a8a8a"/><rect x="15" y="13" width="4" height="2" fill="#8a8a8a"/><rect x="5" y="16" width="4" height="2" fill="#8a8a8a"/><rect x="10" y="16" width="4" height="2" fill="#8a8a8a"/><rect x="15" y="16" width="4" height="2" fill="#8a8a8a"/><rect x="5" y="19" width="4" height="2" fill="#8a8a8a"/><rect x="10" y="19" width="4" height="2" fill="#8a8a8a"/><rect x="15" y="19" width="4" height="2" fill="#8a8a8a"/><rect x="5" y="13" width="4" height="2" fill="#e02020"/><rect x="15" y="13" width="4" height="2" fill="#e02020"/><rect x="10" y="16" width="4" height="2" fill="#20c020"/><rect x="5" y="19" width="4" height="2" fill="#20c020"/></svg>
<div class="a" style="left:884px;top:48px;width:26px;height:26px;border-radius:4px;background:rgba(255,255,255,.14)"></div>
<svg style="left:885.0px;top:49.0px" width="24" height="24" viewBox="0 0 24 24"><rect x="3" y="3" width="18" height="18" fill="#f4f4f4" stroke="#707070"/><rect x="3" y="3" width="18" height="5" fill="#5a7ab8"/><text x="12" y="7.6" font-size="5.5" font-weight="bold" fill="#fff" text-anchor="middle" font-family="Liberation Sans">DFA</text><rect x="5" y="10" width="4" height="2" fill="#8a8a8a"/><rect x="10" y="10" width="4" height="2" fill="#8a8a8a"/><rect x="15" y="10" width="4" height="2" fill="#8a8a8a"/><rect x="5" y="13" width="4" height="2" fill="#8a8a8a"/><rect x="10" y="13" width="4" height="2" fill="#8a8a8a"/><rect x="15" y="13" width="4" height="2" fill="#8a8a8a"/><rect x="5" y="16" width="4" height="2" fill="#8a8a8a"/><rect x="10" y="16" width="4" height="2" fill="#8a8a8a"/><rect x="15" y="16" width="4" height="2" fill="#8a8a8a"/><rect x="5" y="19" width="4" height="2" fill="#8a8a8a"/><rect x="10" y="19" width="4" height="2" fill="#8a8a8a"/><rect x="15" y="19" width="4" height="2" fill="#8a8a8a"/></svg>
<div class="a" style="left:915px;top:48px;width:26px;height:26px;border-radius:4px;background:rgba(255,255,255,.14)"></div>
<svg style="left:916.0px;top:49.0px" width="24" height="24" viewBox="0 0 24 24"><rect x="3" y="3" width="18" height="18" fill="#f4f4f4" stroke="#707070"/><rect x="5" y="10" width="4" height="2" fill="#8a8a8a"/><rect x="10" y="10" width="4" height="2" fill="#8a8a8a"/><rect x="15" y="10" width="4" height="2" fill="#8a8a8a"/><rect x="5" y="13" width="4" height="2" fill="#8a8a8a"/><rect x="10" y="13" width="4" height="2" fill="#8a8a8a"/><rect x="15" y="13" width="4" height="2" fill="#8a8a8a"/><rect x="5" y="16" width="4" height="2" fill="#8a8a8a"/><rect x="10" y="16" width="4" height="2" fill="#8a8a8a"/><rect x="15" y="16" width="4" height="2" fill="#8a8a8a"/><rect x="5" y="19" width="4" height="2" fill="#8a8a8a"/><rect x="10" y="19" width="4" height="2" fill="#8a8a8a"/><rect x="15" y="19" width="4" height="2" fill="#8a8a8a"/><circle cx="12" cy="12" r="7" fill="#3a8ad8" stroke="#2a5a9a"/><path d="M8 9 C10 7 12 10 11 12 C10 15 14 16 13 18 M14 7 C16 9 17 11 16 13" stroke="#3aa23a" stroke-width="2.2" fill="none"/></svg>
<div class="tb" style="left:952px;top:45px;width:292px;height:33px"></div>
<div class="grip" style="left:956px;top:49px;height:23px"></div>
<div class="sep" style="left:951px;top:45px;height:33px"></div>
<div class="a" style="left:960px;top:48px;width:26px;height:26px;border-radius:4px;background:rgba(255,255,255,.14)"></div>
<svg style="left:961.0px;top:49.0px" width="24" height="24" viewBox="0 0 24 24"><circle cx="12" cy="12" r="9.5" fill="#a8bce8" stroke="#4a68b0" stroke-width="1.3"/><circle cx="12" cy="8" r="1.5" fill="#f0d020"/><rect x="10.8" y="10.5" width="2.4" height="7" fill="#f0d020"/></svg>
<div class="a" style="left:990px;top:48px;width:26px;height:26px;border-radius:4px;background:rgba(255,255,255,.14)"></div>
<svg style="left:991.0px;top:49.0px" width="24" height="24" viewBox="0 0 24 24"><rect x="3" y="6" width="14" height="16" fill="#f4f4f4" stroke="#707070"/><g fill="#707070"><rect x="5" y="9" width="4" height="2"/><rect x="11" y="9" width="4" height="2"/><rect x="5" y="12" width="4" height="2"/><rect x="5" y="15" width="4" height="2"/><rect x="5" y="18" width="4" height="2"/></g><rect x="11" y="12" width="4" height="2" fill="#e02020"/><rect x="11" y="15" width="4" height="2" fill="#20b020"/><rect x="11" y="18" width="4" height="2" fill="#20b020"/><circle cx="18" cy="6" r="4.5" fill="#f4b820" stroke="#c08010"/><rect x="17.3" y="4.5" width="1.4" height="4" fill="#333"/></svg>
<div class="a" style="left:1021px;top:48px;width:26px;height:26px;border-radius:4px;background:rgba(255,255,255,.14)"></div>
<svg style="left:1022.0px;top:49.0px" width="24" height="24" viewBox="0 0 24 24"><text x="12" y="11" font-size="9" fill="#333" text-anchor="middle" font-family="Liberation Sans">123</text><rect x="3" y="14" width="18" height="6" fill="#f4c040" stroke="#c08020"/><path d="M5 14 V17 M8 14 V16 M11 14 V17 M14 14 V16 M17 14 V17" stroke="#c08020" stroke-width=".8"/></svg>
<div class="a" style="left:1053px;top:48px;width:26px;height:26px;border-radius:4px;background:rgba(255,255,255,.14)"></div>
<svg style="left:1054.0px;top:49.0px" width="24" height="24" viewBox="0 0 24 24"><path d="M14 11 L20 3 C22 3 22 5 21 6 L15 13Z" fill="#c84060" stroke="#802040"/><path d="M4 18 C6 14 10 10 14 11 L15 13 C14 17 10 20 6 21Z" fill="#e8d090" stroke="#a89040"/></svg>
<div class="a" style="left:1084px;top:48px;width:26px;height:26px;border-radius:4px;background:rgba(255,255,255,.14)"></div>
<svg style="left:1085.0px;top:49.0px" width="24" height="24" viewBox="0 0 24 24"><circle cx="12" cy="12" r="5" fill="#f8d010" stroke="#e0a010"/><path d="M12 2 V5 M12 19 V22 M2 12 H5 M19 12 H22 M5 5 L7 7 M17 17 L19 19 M5 19 L7 17 M17 7 L19 5" stroke="#e8a020" stroke-width="1.4"/></svg>
<div class="a" style="left:1115px;top:48px;width:26px;height:26px;border-radius:4px;background:rgba(255,255,255,.14)"></div>
<svg style="left:1116.0px;top:49.0px" width="24" height="24" viewBox="0 0 24 24"><circle cx="16" cy="8" r="4" fill="#f8d010"/><path d="M16 1 V3 M21 4 L19.5 5.5 M23 9 H21 M11 4 L12.5 5.5" stroke="#e8a020" stroke-width="1.2"/><circle cx="10" cy="14" r="7" fill="#7a92c0" stroke="#4a62a0"/></svg>
<div class="a" style="left:1146px;top:48px;width:26px;height:26px;border-radius:4px;background:rgba(255,255,255,.14)"></div>
<svg style="left:1147.0px;top:49.0px" width="24" height="24" viewBox="0 0 24 24"><rect x="3" y="3" width="18" height="18" fill="#4a6aa8" stroke="#2a4a88"/><rect x="5" y="3" width="2" height="18" fill="#3aa23a"/><rect x="8" y="3" width="2" height="18" fill="#e8e8e8"/><rect x="11" y="3" width="2" height="18" fill="#3aa23a"/><rect x="14" y="3" width="2" height="18" fill="#e8e8e8"/><rect x="17" y="13" width="2" height="6" fill="#2a3a68"/></svg>
<div class="a" style="left:1177px;top:48px;width:26px;height:26px;border-radius:4px;background:rgba(255,255,255,.14)"></div>
<svg style="left:1178.0px;top:49.0px" width="24" height="24" viewBox="0 0 24 24"><path d="M5 3 H19 L12 12 L19 21 H5 L12 12 Z" fill="#2aa83a" stroke="#1a6a2a"/></svg>
<div class="a" style="left:1208px;top:48px;width:26px;height:26px;border-radius:4px;background:rgba(255,255,255,.14)"></div>
<svg style="left:1209.0px;top:49.0px" width="24" height="24" viewBox="0 0 24 24"><rect x="10" y="2" width="12" height="7" fill="#f0d090" stroke="#c07030"/><rect x="11" y="12" width="12" height="8" fill="#f0b080" stroke="#c07030"/><circle cx="16" cy="16" r="4.5" fill="none" stroke="#f02020" stroke-width="1.6"/><path d="M13 13 L19 19" stroke="#f02020" stroke-width="1.6"/><path d="M2 6 L2 18 L5 15 L8 21 L10 20 L7 14 L11 14 Z" fill="#fff" stroke="#000" stroke-width="1"/></svg>
<div class="tb" style="left:0px;top:79px;width:229px;height:34px"></div>
<div class="grip" style="left:3px;top:83px;height:23px"></div>
<div class="a" style="left:7px;top:83px;width:26px;height:26px;border-radius:4px;background:rgba(255,255,255,.14)"></div>
<svg style="left:8.0px;top:84.0px" width="24" height="24" viewBox="0 0 24 24"><rect x="2" y="2" width="20" height="20" rx="2" fill="#e05a5a" stroke="#903030"/><rect x="4.5" y="4.5" width="15" height="15" fill="#3cb43c" stroke="#1a6a1a"/><circle cx="9" cy="9" r="3.5" fill="none" stroke="#1a4a1a" stroke-dasharray="1.5 1"/><path d="M6 17 H13 L16 14 H19" stroke="#a03a2a" fill="none"/><circle cx="14" cy="15" r="1.3" fill="none" stroke="#a03a2a"/></svg>
<div class="a" style="left:38px;top:83px;width:26px;height:26px;border-radius:4px;background:rgba(255,255,255,.14)"></div>
<svg style="left:39.0px;top:84.0px" width="24" height="24" viewBox="0 0 24 24"><rect x="2" y="2" width="20" height="20" rx="2" fill="#e05a5a" stroke="#903030"/><rect x="4.5" y="4.5" width="15" height="15" fill="#3cb43c" stroke="#1a6a1a"/><circle cx="9" cy="9" r="3.5" fill="none" stroke="#1a4a1a" stroke-dasharray="1.5 1"/><rect x="11" y="13" width="5" height="6" fill="#e0e0e0" stroke="#555"/></svg>
<div class="a" style="left:69px;top:83px;width:26px;height:26px;border-radius:4px;background:rgba(255,255,255,.14)"></div>
<svg style="left:70.0px;top:84.0px" width="24" height="24" viewBox="0 0 24 24"><rect x="2" y="2" width="20" height="20" rx="2" fill="#e05a5a" stroke="#903030"/><rect x="4.5" y="4.5" width="15" height="15" fill="#3cb43c" stroke="#1a6a1a"/><path d="M6 9 H11 L14 12 H19 M6 15 H11 L13 13 M14 9 L17 6 H19" stroke="#a03a2a" fill="none"/><circle cx="13" cy="13" r="1.2" fill="none" stroke="#a03a2a"/><circle cx="16" cy="9" r="1.2" fill="none" stroke="#a03a2a"/></svg>
<div class="a" style="left:100px;top:83px;width:26px;height:26px;border-radius:4px;background:rgba(255,255,255,.14)"></div>
<svg style="left:101.0px;top:84.0px" width="24" height="24" viewBox="0 0 24 24"><rect x="2" y="2" width="20" height="20" rx="2" fill="#e05a5a" stroke="#903030"/><rect x="4.5" y="4.5" width="15" height="15" fill="#3cb43c" stroke="#1a6a1a"/><path d="M7 8 C10 6 14 6 17 8 M7 16 C10 18 14 18 17 16" stroke="#1a3a1a" stroke-width="1.5" fill="none"/><g fill="none" stroke="#2a4a8a"><circle cx="6" cy="7" r="1.5"/><circle cx="18" cy="7" r="1.5"/><circle cx="6" cy="17" r="1.5"/><circle cx="18" cy="17" r="1.5"/></g></svg>
<div class="a" style="left:131px;top:83px;width:26px;height:26px;border-radius:4px;background:rgba(255,255,255,.14)"></div>
<svg style="left:132.0px;top:84.0px" width="24" height="24" viewBox="0 0 24 24"><rect x="2" y="2" width="20" height="20" rx="2" fill="#e05a5a" stroke="#903030"/><rect x="4.5" y="4.5" width="15" height="15" fill="#3cb43c" stroke="#1a6a1a"/><path d="M5 9 C8 3 12 13 15 7 C16 5 18 5 19 7 M6 14 H17 M6 17 H15" stroke="#a03a2a" fill="none" stroke-width="1.2"/></svg>
<div class="a" style="left:162px;top:83px;width:26px;height:26px;border-radius:4px;background:rgba(255,255,255,.14)"></div>
<svg style="left:163.0px;top:84.0px" width="24" height="24" viewBox="0 0 24 24"><rect x="2" y="2" width="20" height="20" fill="#b4b4b4"/><path d="M6 11 V6 H18 V11" stroke="#e8e8e8" stroke-width="1.3" fill="none"/></svg>
<div class="a" style="left:193px;top:83px;width:26px;height:26px;border-radius:4px;background:rgba(255,255,255,.14)"></div>
<svg style="left:194.0px;top:84.0px" width="24" height="24" viewBox="0 0 24 24"><rect x="2" y="2" width="20" height="20" rx="2" fill="#e05a5a" stroke="#903030"/><rect x="4.5" y="4.5" width="15" height="15" fill="#3cb43c" stroke="#1a6a1a"/><path d="M7 7 H17 V17 H12 V12 H7 Z" fill="#f0f0f0" stroke="#555" stroke-width=".8"/></svg>
<div class="tb" style="left:231px;top:79px;width:324px;height:34px"></div>
<div class="grip" style="left:235px;top:83px;height:23px"></div>
<div class="sep" style="left:230px;top:79px;height:34px"></div>
<div class="a" style="left:239px;top:83px;width:26px;height:26px;border-radius:4px;background:rgba(255,255,255,.14)"></div>
<svg style="left:240.0px;top:84.0px" width="24" height="24" viewBox="0 0 24 24"><path d="M12 3 H20 V20 H4 V12 H12 Z" fill="#9ab0e0" stroke="#4a68a8" stroke-width="1.3"/></svg>
<div class="a" style="left:270px;top:83px;width:26px;height:26px;border-radius:4px;background:rgba(255,255,255,.14)"></div>
<svg style="left:271.0px;top:84.0px" width="24" height="24" viewBox="0 0 24 24"><rect x="3" y="6" width="18" height="13" fill="#9ab0e0" stroke="#4a68a8" stroke-width="1.3"/></svg>
<div class="a" style="left:301px;top:83px;width:26px;height:26px;border-radius:4px;background:rgba(255,255,255,.14)"></div>
<svg style="left:302.0px;top:84.0px" width="24" height="24" viewBox="0 0 24 24"><circle cx="12" cy="12" r="8.5" fill="#9ab0e0" stroke="#4a68a8" stroke-width="1.3"/></svg>
<div class="a" style="left:332px;top:83px;width:26px;height:26px;border-radius:4px;background:rgba(255,255,255,.14)"></div>
<svg style="left:333.0px;top:84.0px" width="24" height="24" viewBox="0 0 24 24"><rect x="2" y="2" width="20" height="20" fill="#9ab0e0" stroke="#4a68a8" stroke-width="1.3"/><path d="M8 5 V17 L11 14 L13 19 L15 18 L13 13 L17 13 Z" fill="#fff" stroke="#333" stroke-width=".9"/></svg>
<div class="a" style="left:363px;top:83px;width:26px;height:26px;border-radius:4px;background:rgba(255,255,255,.14)"></div>
<svg style="left:364.0px;top:84.0px" width="24" height="24" viewBox="0 0 24 24"><rect x="3" y="3" width="18" height="18" fill="#9ab0e0" stroke="#4a68a8" stroke-width="1.3"/><path d="M6 21 V6 H18 V12 H12 V21 M9 21 V9 H15" stroke="#fff" stroke-width="1.2" fill="none"/></svg>
<div class="a" style="left:394px;top:83px;width:26px;height:26px;border-radius:4px;background:rgba(255,255,255,.14)"></div>
<svg style="left:395.0px;top:84.0px" width="24" height="24" viewBox="0 0 24 24"><rect x="3" y="3" width="18" height="18" fill="#9ab0e0" stroke="#4a68a8" stroke-width="1.3"/><path d="M6 12 C6 8 8 6 12 6 C16 6 18 8 18 12 C18 16 16 18 12 18 V12 Z" fill="none" stroke="#4a68a8" stroke-width="1.3"/></svg>
<div class="a" style="left:425px;top:83px;width:26px;height:26px;border-radius:4px;background:rgba(255,255,255,.14)"></div>
<svg style="left:426.0px;top:84.0px" width="24" height="24" viewBox="0 0 24 24"><rect x="3" y="3" width="18" height="18" fill="#9ab0e0" stroke="#4a68a8" stroke-width="1.3"/><rect x="7" y="7" width="10" height="10" fill="#e8eef8" stroke="#4a68a8"/></svg>
<div class="a" style="left:456px;top:83px;width:26px;height:26px;border-radius:4px;background:rgba(255,255,255,.14)"></div>
<svg style="left:457.0px;top:84.0px" width="24" height="24" viewBox="0 0 24 24"><rect x="3" y="3" width="18" height="18" fill="#9ab0e0" stroke="#4a68a8" stroke-width="1.3"/><circle cx="12" cy="12" r="6" fill="#e8eef8" stroke="#4a68a8"/></svg>
<div class="a" style="left:487px;top:83px;width:26px;height:26px;border-radius:4px;background:rgba(255,255,255,.14)"></div>
<svg style="left:488.0px;top:84.0px" width="24" height="24" viewBox="0 0 24 24"><rect x="3" y="5" width="17" height="15" fill="none" stroke="#4a68a8" stroke-dasharray="2 1.5"/><path d="M4 5 H20 V19 Z" fill="#9ab0e0" stroke="#4a68a8"/></svg>
<div class="a" style="left:518px;top:83px;width:26px;height:26px;border-radius:4px;background:rgba(255,255,255,.14)"></div>
<svg style="left:519.0px;top:84.0px" width="24" height="24" viewBox="0 0 24 24"><rect x="3" y="4" width="18" height="5" fill="#a8a8a8"/><path d="M7 2 L16 11 M16 2 L7 11" stroke="#e03a2a" stroke-width="2.6"/><rect x="3" y="15" width="18" height="5" fill="#9ab0e0" stroke="#4a68a8"/></svg>
<div class="tb" style="left:556px;top:79px;width:105px;height:34px"></div>
<div class="grip" style="left:560px;top:83px;height:23px"></div>
<div class="sep" style="left:555px;top:79px;height:34px"></div>
<div class="a" style="left:562px;top:83px;width:26px;height:26px;border-radius:4px;background:rgba(255,255,255,.14)"></div>
<svg style="left:563.0px;top:84.0px" width="24" height="24" viewBox="0 0 24 24"><rect x="3" y="6" width="18" height="14" fill="#3cb43c" stroke="#1a6a1a"/><circle cx="12" cy="11" r="5" fill="none" stroke="#e03a3a" stroke-width="1.8"/><rect x="3" y="18" width="18" height="2" fill="#1a5a1a"/></svg>
<div class="a" style="left:593px;top:83px;width:26px;height:26px;border-radius:4px;background:rgba(255,255,255,.14)"></div>
<svg style="left:594.0px;top:84.0px" width="24" height="24" viewBox="0 0 24 24"><path d="M5 3 V21" stroke="#6a7a9a" stroke-width="1.3"/><path d="M19 3 V21" stroke="#6a7a9a" stroke-dasharray="2 2" stroke-width="1.3"/><path d="M5 12 H15" stroke="#d03030" stroke-width="1.5"/><path d="M13 9 L17 12 L13 15Z" fill="#d03030"/></svg>
<div class="a" style="left:625px;top:83px;width:26px;height:26px;border-radius:4px;background:rgba(255,255,255,.14)"></div>
<svg style="left:626.0px;top:84.0px" width="24" height="24" viewBox="0 0 24 24"><path d="M4 7 V17 M20 7 V17" stroke="#6a7a9a" stroke-width="1.3"/><path d="M5 12 H19" stroke="#d03030" stroke-width="1.3"/><path d="M5 12 L8 10 V14Z M19 12 L16 10 V14Z" fill="#d03030"/></svg>
<div class="tb" style="left:662px;top:79px;width:293px;height:34px"></div>
<div class="grip" style="left:666px;top:83px;height:23px"></div>
<div class="sep" style="left:661px;top:79px;height:34px"></div>
<div class="a" style="left:670px;top:83px;width:26px;height:26px;border-radius:4px;background:rgba(255,255,255,.14)"></div>
<svg style="left:671.0px;top:84.0px" width="24" height="24" viewBox="0 0 24 24"><rect x="4" y="8" width="15" height="12" fill="#f0f0f0" stroke="#808080"/><rect x="2" y="14" width="19" height="7" fill="#4a6aa8"/><text x="11.5" y="20" font-size="6.5" font-weight="bold" fill="#fff" text-anchor="middle" font-family="Liberation Sans">ODB</text><path d="M12 11 L20 4 M16 3 H21 V8" stroke="#5a88d0" stroke-width="2.4" fill="none"/></svg>
<div class="a" style="left:701px;top:83px;width:26px;height:26px;border-radius:4px;background:rgba(255,255,255,.14)"></div>
<svg style="left:702.0px;top:84.0px" width="24" height="24" viewBox="0 0 24 24"><rect x="2" y="5" width="20" height="14" fill="#7a92c8" stroke="#4a62a0"/><path d="M2 10 H22 M2 14 H22 M7 5 V19 M17 5 V19" stroke="#d8e0f0"/><path d="M10 3 H14 V19 L12 23 L10 19 Z" fill="#b0b0b0" stroke="#555"/></svg>
<div class="a" style="left:732px;top:83px;width:26px;height:26px;border-radius:4px;background:rgba(255,255,255,.14)"></div>
<svg style="left:733.0px;top:84.0px" width="24" height="24" viewBox="0 0 24 24"><path d="M4 2 H9 V18 L6.5 22 L4 18 Z" fill="#a8a8a8" stroke="#555"/><path d="M5 5 L8 7 M5 9 L8 11 M5 13 L8 15" stroke="#555"/><path d="M11 20 L16 14 C15 11 17 8 20 9 L18 11 L19 13 L21 12 C22 15 19 17 17 16 L12 22 Z" fill="#e0e0e0" stroke="#606060"/></svg>
<div class="a" style="left:763px;top:83px;width:26px;height:26px;border-radius:4px;background:rgba(255,255,255,.14)"></div>
<svg style="left:764.0px;top:84.0px" width="24" height="24" viewBox="0 0 24 24"><rect x="3" y="7" width="18" height="13" rx="2" fill="#d8d8d8" stroke="#707070"/><rect x="8" y="4" width="8" height="4" fill="#c8c8c8" stroke="#707070"/><circle cx="12" cy="13.5" r="4.5" fill="#5a7ab8" stroke="#404040"/><circle cx="12" cy="13.5" r="2" fill="#c8d8f0"/></svg>
<div class="a" style="left:794px;top:83px;width:26px;height:26px;border-radius:4px;background:rgba(255,255,255,.14)"></div>
<svg style="left:795.0px;top:84.0px" width="24" height="24" viewBox="0 0 24 24"><text x="2" y="7" font-size="6.5" font-weight="bold" fill="#222" font-family="Liberation Sans">R1R2</text><text x="15" y="14" font-size="6.5" font-weight="bold" fill="#222" font-family="Liberation Sans">V1</text><text x="15" y="22" font-size="6.5" font-weight="bold" fill="#222" font-family="Liberation Sans">V2</text><rect x="4" y="9" width="10" height="8" fill="#9ab0e0" stroke="#5a6a9a" stroke-dasharray="1 1"/><path d="M3 21 L10 15 C9 12 12 10 14 12" stroke="#707070" stroke-width="2.2" fill="none"/></svg>
<div class="a" style="left:825px;top:83px;width:26px;height:26px;border-radius:4px;background:rgba(255,255,255,.14)"></div>
<svg style="left:826.0px;top:84.0px" width="24" height="24" viewBox="0 0 24 24"><path d="M3 3 H8 V18 L5.5 22 L3 18 Z" fill="#a8a8a8" stroke="#555"/><rect x="10" y="3" width="12" height="12" fill="#f4f4f4" stroke="#808080"/><path d="M12 6 H20 M12 9 H20 M12 12 H20" stroke="#707070"/></svg>
<div class="a" style="left:856px;top:83px;width:26px;height:26px;border-radius:4px;background:rgba(255,255,255,.14)"></div>
<svg style="left:857.0px;top:84.0px" width="24" height="24" viewBox="0 0 24 24"><rect x="2" y="2" width="20" height="20" fill="#5a7ac0" stroke="#2a4a90" stroke-width="1.2"/><rect x="4" y="4" width="16" height="16" fill="#9ab0e0"/><g fill="#f0e040"><rect x="11" y="6" width="2" height="2"/><rect x="8" y="10" width="2" height="2"/><rect x="13" y="10" width="2" height="2"/><rect x="11" y="14" width="2" height="2"/><rect x="7" y="17" width="2" height="2"/><rect x="15" y="17" width="2" height="2"/></g></svg>
<div class="a" style="left:887px;top:83px;width:26px;height:26px;border-radius:4px;background:rgba(255,255,255,.14)"></div>
<svg style="left:888.0px;top:84.0px" width="24" height="24" viewBox="0 0 24 24"><circle cx="12" cy="14" r="6.5" fill="#f0b020" stroke="#c07010"/><text x="12" y="17" font-size="7" font-weight="bold" fill="#333" text-anchor="middle" font-family="Liberation Sans">TP</text><path d="M17 10 L21 5 M6 14 H2" stroke="#c07010" stroke-width="1.2"/><circle cx="21" cy="4" r="1.8" fill="none" stroke="#c07010"/><circle cx="2" cy="14" r="1.5" fill="none" stroke="#c07010"/></svg>
<div class="a" style="left:918px;top:83px;width:26px;height:26px;border-radius:4px;background:rgba(255,255,255,.14)"></div>
<svg style="left:919.0px;top:84.0px" width="24" height="24" viewBox="0 0 24 24"><g fill="#9ab0e0" stroke="#4a68a8"><rect x="3" y="3" width="4.5" height="5"/><rect x="9.8" y="3" width="4.5" height="5"/><rect x="16.5" y="3" width="4.5" height="5"/><rect x="6.5" y="10" width="4.5" height="5"/><rect x="13" y="10" width="4.5" height="5"/><rect x="3" y="17" width="4.5" height="5"/><rect x="9.8" y="17" width="4.5" height="5"/><rect x="16.5" y="17" width="4.5" height="5"/></g></svg>
<div class="tb" style="left:956px;top:79px;width:42px;height:34px"></div>
<div class="grip" style="left:958px;top:83px;height:23px"></div>
<div class="sep" style="left:955px;top:79px;height:34px"></div>
<div class="a" style="left:962px;top:83px;width:26px;height:26px;border-radius:4px;background:rgba(255,255,255,.14)"></div>
<svg style="left:963.0px;top:84.0px" width="24" height="24" viewBox="0 0 24 24"><path d="M3 19 L8 5 L14 18 L20 8" stroke="#4a68a8" stroke-width="1.5" fill="none"/><g fill="#9ab0e0" stroke="#4a68a8"><circle cx="3" cy="19" r="2"/><circle cx="8" cy="5" r="2"/><circle cx="14" cy="18" r="2"/><circle cx="20" cy="8" r="2"/></g></svg>
<div class="tb" style="left:999px;top:79px;width:169px;height:34px"></div>
<div class="grip" style="left:1003px;top:83px;height:23px"></div>
<div class="sep" style="left:998px;top:79px;height:34px"></div>
<div class="a" style="left:1008px;top:83px;width:26px;height:26px;border-radius:4px;background:rgba(255,255,255,.14)"></div>
<svg style="left:1009.0px;top:84.0px" width="24" height="24" viewBox="0 0 24 24"><path d="M6 8 H15 L19 12 V22 H6 Z" fill="#f4f4f4" stroke="#707070"/><path d="M8 13 H16 M8 16 H16 M8 19 H16" stroke="#a0a0a0"/><path d="M3 7 C5 1 8 1 9 5 C10 9 13 9 15 4 C16 2 18 2 20 4" stroke="#c02020" stroke-width="1.6" fill="none"/></svg>
<div class="a" style="left:1039px;top:83px;width:26px;height:26px;border-radius:4px;background:rgba(255,255,255,.14)"></div>
<svg style="left:1040.0px;top:84.0px" width="24" height="24" viewBox="0 0 24 24"><path d="M3 10 C6 9 9 9 12 11 C15 9 18 9 21 10 V21 C18 20 15 20 12 22 C9 20 6 20 3 21 Z" fill="#f0f4fa" stroke="#4a68a8" stroke-width="1.2"/><path d="M12 11 V22" stroke="#4a68a8"/><path d="M3 7 C5 1 8 1 9 5 C10 9 13 9 15 4 C16 2 18 2 20 4" stroke="#c02020" stroke-width="1.6" fill="none"/></svg>
<div class="a" style="left:1070px;top:83px;width:26px;height:26px;border-radius:4px;background:rgba(255,255,255,.14)"></div>
<svg style="left:1071.0px;top:84.0px" width="24" height="24" viewBox="0 0 24 24"><rect x="4" y="10" width="16" height="12" fill="#8aa2d8" stroke="#3a58a0"/><path d="M6 10 V8 M9 10 V8 M12 10 V8 M15 10 V8 M18 10 V8" stroke="#3a58a0"/><path d="M10 15 H14 M12 13 V17" stroke="#fff"/><path d="M3 7 C5 1 8 1 9 5 C10 9 13 9 15 4 C16 2 18 2 20 4" stroke="#c02020" stroke-width="1.6" fill="none"/></svg>
<div class="a" style="left:1101px;top:83px;width:26px;height:26px;border-radius:4px;background:rgba(255,255,255,.14)"></div>
<svg style="left:1102.0px;top:84.0px" width="24" height="24" viewBox="0 0 24 24"><rect x="5" y="10" width="14" height="12" fill="#fff" stroke="#707070"/><path d="M7 10 V8 M10 10 V8 M13 10 V8 M16 10 V8" stroke="#d0a020" stroke-width="1.5"/><path d="M8 16 L11 19 L16 12" stroke="#2aa02a" stroke-width="1.8" fill="none"/><path d="M3 7 C5 1 8 1 9 5 C10 9 13 9 15 4 C16 2 18 2 20 4" stroke="#c02020" stroke-width="1.6" fill="none"/></svg>
<div class="a" style="left:1133px;top:83px;width:26px;height:26px;border-radius:4px;background:rgba(255,255,255,.14)"></div>
<svg style="left:1134.0px;top:84.0px" width="24" height="24" viewBox="0 0 24 24"><path d="M20 9 L15 15" stroke="#333" stroke-width="2.5"/><path d="M15 15 C11 18 7 15 5 19 C4 22 9 23 11 21" stroke="#555" stroke-width="1.5" fill="none"/><path d="M3 7 C5 1 8 1 9 5 C10 9 13 9 15 4 C16 2 18 2 20 4" stroke="#c02020" stroke-width="1.6" fill="none"/></svg>
<div class="tb" style="left:1169px;top:79px;width:137px;height:34px"></div>
<div class="grip" style="left:1172px;top:83px;height:23px"></div>
<div class="sep" style="left:1168px;top:79px;height:34px"></div>
<div class="a" style="left:1177px;top:83px;width:26px;height:26px;border-radius:4px;background:rgba(255,255,255,.14)"></div>
<svg style="left:1178.0px;top:84.0px" width="24" height="24" viewBox="0 0 24 24"><rect x="10" y="3" width="12" height="11" fill="#dae4f4" stroke="#4a68a8"/><rect x="6" y="7" width="12" height="11" fill="#c8d4ee" stroke="#4a68a8"/><rect x="3" y="11" width="12" height="11" fill="#9ab0e0" stroke="#4a68a8"/><path d="M3 13 H1 M3 16 H1 M3 19 H1" stroke="#e0a020" stroke-width="1.5"/></svg>
<div class="a" style="left:1208px;top:83px;width:26px;height:26px;border-radius:4px;background:rgba(255,255,255,.14)"></div>
<svg style="left:1209.0px;top:84.0px" width="24" height="24" viewBox="0 0 24 24"><path d="M2 3 L12 10 L22 3 V17 L12 10 L2 17 Z" fill="#9ab8e8" stroke="#4a68a8"/><rect x="6" y="16" width="16" height="6" fill="#f0f0f0" stroke="#707070"/><rect x="8" y="18" width="8" height="2" fill="#2aa02a"/></svg>
<div class="a" style="left:1239px;top:83px;width:26px;height:26px;border-radius:4px;background:rgba(255,255,255,.14)"></div>
<svg style="left:1240.0px;top:84.0px" width="24" height="24" viewBox="0 0 24 24"><rect x="3" y="4" width="18" height="16" fill="#f0f0f0" stroke="#707070" stroke-width="1.2"/><rect x="3" y="4" width="18" height="2" fill="#7a92c8"/><path d="M7 9 L12 12 L17 9 V17 L12 14 L7 17 Z" fill="#9ab8e8" stroke="#4a68a8"/></svg>
<div class="a" style="left:1270px;top:83px;width:26px;height:26px;border-radius:4px;background:rgba(255,255,255,.14)"></div>
<svg style="left:1271.0px;top:84.0px" width="24" height="24" viewBox="0 0 24 24"><path d="M12 3 C18 3 21 7 21 11 C21 15 18 17 16 18 L17 22 L12 19 C6 19 3 15 3 11 C3 7 6 3 12 3Z" fill="#b0c4ec" stroke="#3a58a0" stroke-width="1.3"/><text x="12" y="15.5" font-size="12" font-weight="bold" fill="#2a4890" text-anchor="middle" font-family="Liberation Sans">?</text></svg>
<div class="a" style="left:0;top:113px;width:1600px;height:1px;background:#fafafa"></div>
<div class="a" style="left:0px;top:115px;width:33px;height:104px;border-radius:0 3px 3px 0;background:linear-gradient(90deg,#e4e4e4,#d8d8d8 60%,#c4c4c4)"></div>
<div class="griph" style="left:5px;top:118px;width:23px"></div>
<svg style="left:4.0px;top:124.0px" width="24" height="24" viewBox="0 0 24 24"><path d="M3 9 H16 V22 H3 Z" fill="#3cb43c" stroke="#1a6a1a"/><path d="M5 12 H14 M5 15 H14 M5 18 H14 M8 10 V21 M11 10 V21" stroke="#1a6a1a" stroke-width=".8"/><rect x="12" y="3" width="9" height="8" rx="1.5" fill="#d8d8d8" stroke="#555"/><path d="M4 7 C5 3 9 3 10 5" stroke="#d03030" stroke-width="1.5" fill="none"/></svg>
<svg style="left:4.0px;top:154.0px" width="24" height="24" viewBox="0 0 24 24"><rect x="4" y="4" width="16" height="16" fill="none" stroke="#3a58a0" stroke-dasharray="1.4 1.2" stroke-width="1.4"/><text x="12" y="15" font-size="8" fill="#c03030" text-anchor="middle" font-family="Liberation Sans">U1</text></svg>
<svg style="left:4.0px;top:185.0px" width="24" height="24" viewBox="0 0 24 24"><path d="M4 6 H2 V18 H4" stroke="#d03030" stroke-width="1.6" fill="none"/><rect x="5" y="9" width="4" height="2.5" fill="#f0e020"/><rect x="5" y="13" width="4" height="2.5" fill="#f0e020"/><path d="M10 7 H17 C21 7 21 17 17 17 H10 Z" fill="#a8a8a8" stroke="#444" stroke-width="1.2"/></svg>
<div class="a" style="left:0px;top:220px;width:33px;height:262px;border-radius:0 3px 3px 0;background:linear-gradient(90deg,#e4e4e4,#d8d8d8 60%,#c4c4c4)"></div>
<div class="griph" style="left:5px;top:223px;width:23px"></div>
<svg style="left:4.0px;top:229.0px" width="24" height="24" viewBox="0 0 24 24"><rect x="15" y="3" width="5" height="5" fill="#f0e020" stroke="#888" stroke-width=".6"/><rect x="4" y="16" width="5" height="5" fill="#f0e020" stroke="#888" stroke-width=".6"/><path d="M9 18 H12 V10 L15 7" stroke="#222" stroke-width="1.4" fill="none" stroke-dasharray="0 0"/></svg>
<svg style="left:4.0px;top:261.0px" width="24" height="24" viewBox="0 0 24 24"><path d="M4 3 V20 H20 V14 H10 V3 Z" fill="#dfe7f6" stroke="#5a78b8" stroke-width="1.8"/><path d="M10 8 H20 V14" stroke="#8aa0d0" stroke-dasharray="1.5 1" fill="none"/><path d="M15 7 V13 M13 11 L15 13 L17 11" stroke="#d03030" stroke-width="1.3" fill="none"/></svg>
<svg style="left:4.0px;top:292.0px" width="24" height="24" viewBox="0 0 24 24"><path d="M2 12 H6 V4 H12 V18 H17 V12 H22" stroke="#222" stroke-width="1.3" fill="none"/><path d="M9 14 V7 M7.5 9 L9 7 L10.5 9 M14.5 8 V15 M13 13 L14.5 15 L16 13" stroke="#d03030" stroke-width="1.2" fill="none"/></svg>
<svg style="left:4.0px;top:324.0px" width="24" height="24" viewBox="0 0 24 24"><rect x="3" y="2" width="4" height="4" fill="#f0e020" stroke="#888" stroke-width=".5"/><rect x="18" y="2" width="4" height="4" fill="#f0e020" stroke="#888" stroke-width=".5"/><path d="M5 6 C4 10 9 13 5 20 M20 6 V21" stroke="#555" stroke-width="1.3" fill="none"/><path d="M9 13 H16 M14 11 L16 13 L14 15" stroke="#d03030" stroke-width="1.5" fill="none"/></svg>
<svg style="left:4.0px;top:354.0px" width="24" height="24" viewBox="0 0 24 24"><path d="M4 4 L15 12 L4 20" stroke="#3a58a0" stroke-width="6.5" fill="none" stroke-linejoin="round"/><path d="M4 4 L15 12 L4 20" stroke="#a8bce8" stroke-width="3.5" fill="none" stroke-linejoin="round"/><ellipse cx="9" cy="12" rx="2.2" ry="1.3" fill="#d03030"/><ellipse cx="17" cy="12" rx="2.2" ry="1.3" fill="#d03030"/></svg>
<svg style="left:4.0px;top:385.0px" width="24" height="24" viewBox="0 0 24 24"><g fill="#e06a3a"><rect x="3" y="4" width="15" height="3"/><rect x="3" y="9" width="15" height="3"/><rect x="3" y="14" width="15" height="3"/><rect x="3" y="19" width="15" height="3"/></g><path d="M18 3 L22 5.5 L18 8 M18 8 L22 10.5 L18 13 M18 13 L22 15.5 L18 18" fill="#e06a3a"/></svg>
<svg style="left:4.0px;top:417.0px" width="24" height="24" viewBox="0 0 24 24"><rect x="2" y="2" width="20" height="20" fill="#5a7ac0" stroke="#2a4a90"/><rect x="4" y="4" width="16" height="16" fill="#e8eef8"/><path d="M6 6 L18 18 M18 6 L6 18" stroke="#d03030" stroke-width="1.5"/><path d="M5 9 V5 H9 M15 5 H19 V9 M19 15 V19 H15 M9 19 H5 V15" stroke="#4a68a8" stroke-width="1.3" fill="none"/></svg>
<svg style="left:4.0px;top:447.0px" width="24" height="24" viewBox="0 0 24 24"><path d="M3 18 V9 C3 5 8 5 8 9 V15 C8 19 13 19 13 15 V9 C13 5 18 5 18 9 V17" stroke="#3a4a7a" stroke-width="1.5" fill="none"/><circle cx="21" cy="18" r="1.5" fill="#3a4a7a"/></svg>
<div class="a" style="left:0px;top:483px;width:33px;height:137px;border-radius:0 3px 3px 0;background:linear-gradient(90deg,#e4e4e4,#d8d8d8 60%,#c4c4c4)"></div>
<div class="griph" style="left:5px;top:486px;width:23px"></div>
<svg style="left:4.0px;top:493.0px" width="24" height="24" viewBox="0 0 24 24"><path d="M3 3 L21 20" stroke="#4a62a0" stroke-width="1.8"/></svg>
<svg style="left:4.0px;top:524.0px" width="24" height="24" viewBox="0 0 24 24"><rect x="3" y="5" width="17" height="14" fill="#9ab0e0" stroke="#4a68a8" stroke-width="1.3"/></svg>
<svg style="left:4.0px;top:554.0px" width="24" height="24" viewBox="0 0 24 24"><text x="1" y="12" font-size="10" fill="#808080" font-family="Liberation Sans">abc</text><circle cx="16" cy="17" r="5" fill="#2aa02a"/><path d="M16 14 V20 M13 17 H19" stroke="#fff" stroke-width="1.8"/></svg>
<svg style="left:4.0px;top:586.0px" width="24" height="24" viewBox="0 0 24 24"><text x="1" y="10" font-size="10" fill="#808080" font-family="Liberation Sans">abc</text><path d="M8 21 L10 16 L19 8 L22 11 L13 19 Z" fill="#f0b020" stroke="#a06010"/></svg>
<div class="a" style="left:35px;top:117px;width:47px;height:385px;border-radius:0 3px 3px 0;background:linear-gradient(90deg,#e8e8e8,#dcdcdc 50%,#c8c8c8)"></div>
<div class="griph" style="left:40px;top:121px;width:38px"></div>
<svg style="left:46.0px;top:125.0px" width="24" height="24" viewBox="0 0 24 24"><g stroke="#4a68a8" stroke-width="1.1" fill="none"><path d="M2 3 L7 7 M2 6 L7 7 M2 9 L7 7 M17 17 L22 13 M17 17 L22 16 M17 17 L22 19 M17 17 L22 22"/></g><path d="M7 7 L17 17" stroke="#2aa02a" stroke-width="2"/><g fill="#2a9a2a"><circle cx="2" cy="3" r="1.2"/><circle cx="2" cy="6" r="1.2"/><circle cx="2" cy="9" r="1.2"/><circle cx="22" cy="13" r="1.2"/><circle cx="22" cy="16" r="1.2"/><circle cx="22" cy="19" r="1.2"/><circle cx="22" cy="22" r="1.2"/></g><ellipse cx="18" cy="6" rx="5" ry="1.5" fill="#505050"/><rect x="15" y="2" width="6" height="4" fill="#b04040"/></svg>
<svg style="left:46.0px;top:157.0px" width="24" height="24" viewBox="0 0 24 24"><g stroke="#4a68a8" stroke-width="1.1" fill="none"><path d="M2 3 L7 7 M2 6 L7 7 M2 9 L7 7 M17 17 L22 13 M17 17 L22 16 M17 17 L22 19 M17 17 L22 22"/></g><path d="M7 7 L17 17" stroke="#2aa02a" stroke-width="2"/><g fill="#2a9a2a"><circle cx="2" cy="3" r="1.2"/><circle cx="2" cy="6" r="1.2"/><circle cx="2" cy="9" r="1.2"/><circle cx="22" cy="13" r="1.2"/><circle cx="22" cy="16" r="1.2"/><circle cx="22" cy="19" r="1.2"/><circle cx="22" cy="22" r="1.2"/></g></svg>
<svg style="left:46.0px;top:188.0px" width="24" height="24" viewBox="0 0 24 24"><g stroke="#4a68a8" stroke-width="1.1" fill="none"><path d="M2 3 L7 7 M2 6 L7 7 M2 9 L7 7 M17 17 L22 13 M17 17 L22 16 M17 17 L22 19 M17 17 L22 22"/></g><path d="M7 7 L17 17" stroke="#2aa02a" stroke-width="2"/><g fill="#2a9a2a"><circle cx="2" cy="3" r="1.2"/><circle cx="2" cy="6" r="1.2"/><circle cx="2" cy="9" r="1.2"/><circle cx="22" cy="13" r="1.2"/><circle cx="22" cy="16" r="1.2"/><circle cx="22" cy="19" r="1.2"/><circle cx="22" cy="22" r="1.2"/></g><path d="M15 3 L21 9 M21 3 L15 9" stroke="#e03a2a" stroke-width="2"/></svg>
<svg style="left:46.0px;top:219.0px" width="24" height="24" viewBox="0 0 24 24"><path d="M8 3 H16 L20 7 V18 H8 Z" fill="#fafafa" stroke="#707070"/><g stroke="#4a68a8" stroke-width="1.1" fill="none"><path d="M2 3 L7 7 M2 6 L7 7 M2 9 L7 7 M17 17 L22 13 M17 17 L22 16 M17 17 L22 19 M17 17 L22 22"/></g><path d="M7 7 L17 17" stroke="#2aa02a" stroke-width="2"/><g fill="#2a9a2a"><circle cx="2" cy="3" r="1.2"/><circle cx="2" cy="6" r="1.2"/><circle cx="2" cy="9" r="1.2"/><circle cx="22" cy="13" r="1.2"/><circle cx="22" cy="16" r="1.2"/><circle cx="22" cy="19" r="1.2"/><circle cx="22" cy="22" r="1.2"/></g><path d="M4 22 L6 17 L12 12 L14 14 L8 19 Z" fill="#f0a020" stroke="#a05010" stroke-width=".8"/></svg>
<svg style="left:46.0px;top:251.0px" width="24" height="24" viewBox="0 0 24 24"><path d="M3 4 H21 M3 20 H21" stroke="#2aa02a" stroke-width="2"/><path d="M6 8 L12 12 L6 16 Z M18 8 L12 12 L18 16 Z" fill="#50e050"/><path d="M12 5 V19 M9 8 L12 5 L15 8 M9 16 L12 19 L15 16" stroke="#4a68a8" stroke-width="1.5" fill="none"/><g fill="#2a9a2a"><circle cx="2" cy="3" r="1.2"/><circle cx="2" cy="6" r="1.2"/><circle cx="22" cy="3" r="1.2"/><circle cx="22" cy="6" r="1.2"/><circle cx="2" cy="18" r="1.2"/><circle cx="2" cy="21" r="1.2"/><circle cx="22" cy="18" r="1.2"/><circle cx="22" cy="21" r="1.2"/></g></svg>
<svg style="left:46.0px;top:281.0px" width="24" height="24" viewBox="0 0 24 24"><path d="M7 3 H15 L19 7 V20 H7 Z" fill="#fafafa" stroke="#707070"/><g stroke="#4a68a8" stroke-width="1.1" fill="none"><path d="M2 3 L7 7 M2 6 L7 7 M2 9 L7 7 M17 17 L22 13 M17 17 L22 16 M17 17 L22 19 M17 17 L22 22"/></g><path d="M7 7 L17 17" stroke="#2aa02a" stroke-width="2"/><g fill="#2a9a2a"><circle cx="2" cy="3" r="1.2"/><circle cx="2" cy="6" r="1.2"/><circle cx="2" cy="9" r="1.2"/><circle cx="22" cy="13" r="1.2"/><circle cx="22" cy="16" r="1.2"/><circle cx="22" cy="19" r="1.2"/><circle cx="22" cy="22" r="1.2"/></g></svg>
<svg style="left:46.0px;top:312.0px" width="24" height="24" viewBox="0 0 24 24"><rect x="9" y="8" width="8" height="10" rx="3" fill="#a0a0a0"/><g stroke="#4a68a8" stroke-width="1.1" fill="none"><path d="M2 3 L7 7 M2 6 L7 7 M2 9 L7 7 M17 17 L22 13 M17 17 L22 16 M17 17 L22 19 M17 17 L22 22"/></g><path d="M7 7 L17 17" stroke="#2aa02a" stroke-width="2"/><g fill="#2a9a2a"><circle cx="2" cy="3" r="1.2"/><circle cx="2" cy="6" r="1.2"/><circle cx="2" cy="9" r="1.2"/><circle cx="22" cy="13" r="1.2"/><circle cx="22" cy="16" r="1.2"/><circle cx="22" cy="19" r="1.2"/><circle cx="22" cy="22" r="1.2"/></g></svg>
<svg style="left:46.0px;top:374.0px" width="24" height="24" viewBox="0 0 24 24"><g stroke="#2a9a2a" stroke-width="1" fill="none"><path d="M2 4 H8 M2 8 H8 M2 12 H8 M16 14 H22 M16 18 H22 M16 22 H22"/></g><g fill="#2a9a2a"><circle cx="2" cy="4" r="1.2"/><circle cx="2" cy="8" r="1.2"/><circle cx="2" cy="12" r="1.2"/><circle cx="22" cy="14" r="1.2"/><circle cx="22" cy="18" r="1.2"/><circle cx="22" cy="22" r="1.2"/></g><rect x="7" y="4" width="11" height="17" fill="#e8e8e8" stroke="#707070"/><g fill="#909090"><rect x="9" y="6" width="3" height="2"/><rect x="13" y="6" width="3" height="2"/><rect x="9" y="10" width="3" height="2"/><rect x="9" y="14" width="3" height="2"/></g><rect x="13" y="10" width="3" height="2" fill="#e02020"/><rect x="13" y="14" width="3" height="2" fill="#2a9a2a"/></svg>
<svg style="left:46.0px;top:405.0px" width="24" height="24" viewBox="0 0 24 24"><g stroke="#2a9a2a" stroke-width="1" fill="none"><path d="M2 4 H8 M2 8 H8 M2 12 H8 M16 14 H22 M16 18 H22 M16 22 H22"/></g><g fill="#2a9a2a"><circle cx="2" cy="4" r="1.2"/><circle cx="2" cy="8" r="1.2"/><circle cx="2" cy="12" r="1.2"/><circle cx="22" cy="14" r="1.2"/><circle cx="22" cy="18" r="1.2"/><circle cx="22" cy="22" r="1.2"/></g><rect x="8" y="5" width="8" height="16" fill="#e8e8e8" stroke="#707070"/><circle cx="12" cy="8.5" r="1.8" fill="#d03030"/><circle cx="12" cy="13" r="1.8" fill="#f0b020"/><circle cx="12" cy="17.5" r="1.8" fill="#20e020"/></svg>
<svg style="left:46.0px;top:436.0px" width="24" height="24" viewBox="0 0 24 24"><g stroke="#2a9a2a" stroke-width="1" fill="none"><path d="M2 4 H8 M2 8 H8 M2 12 H8 M16 14 H22 M16 18 H22 M16 22 H22"/></g><g fill="#2a9a2a"><circle cx="2" cy="4" r="1.2"/><circle cx="2" cy="8" r="1.2"/><circle cx="2" cy="12" r="1.2"/><circle cx="22" cy="14" r="1.2"/><circle cx="22" cy="18" r="1.2"/><circle cx="22" cy="22" r="1.2"/></g><rect x="8" y="5" width="8" height="16" fill="#e8e8e8" stroke="#707070"/><rect x="10" y="10" width="4" height="6" rx="1" fill="#4a68a8"/></svg>
<svg style="left:46.0px;top:468.0px" width="24" height="24" viewBox="0 0 24 24"><g stroke="#2a9a2a" stroke-width="1" fill="none"><path d="M2 4 H8 M2 8 H8 M2 12 H8 M16 14 H22 M16 18 H22 M16 22 H22"/></g><g fill="#2a9a2a"><circle cx="2" cy="4" r="1.2"/><circle cx="2" cy="8" r="1.2"/><circle cx="2" cy="12" r="1.2"/><circle cx="22" cy="14" r="1.2"/><circle cx="22" cy="18" r="1.2"/><circle cx="22" cy="22" r="1.2"/></g><rect x="8" y="5" width="8" height="16" fill="#e8e8e8" stroke="#707070"/><rect x="10" y="10" width="4" height="6" rx="1" fill="#4a68a8"/></svg>
<div class="a" style="left:36px;top:340px;width:45px;height:32px;background:#e6e6e6;border-radius:2px"></div>
<svg style="left:37px;top:343px" width="26" height="26" viewBox="0 0 26 26"><path d="M3 5 C7 5 8 10 13 10 C18 10 19 5 23 5" stroke="#f0a020" stroke-width="1.8" fill="none"/><path d="M3 17 C8 14 18 20 23 17 M3 21 C8 18 18 24 23 21" stroke="#2a9a2a" stroke-width="1.6" fill="none"/><path d="M11 9 H15 V13 H18 L13 17 L8 13 H11 Z" fill="#7a9ad8" stroke="#3a58a0" stroke-width=".8"/><g fill="#fff" stroke="#333" stroke-width=".6"><circle cx="2" cy="4" r="1.3"/><circle cx="2" cy="7" r="1.3"/><circle cx="24" cy="4" r="1.3"/><circle cx="24" cy="7" r="1.3"/><circle cx="2" cy="17" r="1.3"/><circle cx="2" cy="21" r="1.3"/><circle cx="24" cy="17" r="1.3"/><circle cx="24" cy="21" r="1.3"/></g></svg>
<svg style="left:66px;top:345px" width="14" height="24" viewBox="0 0 14 24"><path d="M7 2 V17 M3 13 L7 17 L11 13 M2 21 H12" stroke="#4a6aa8" stroke-width="1.3" fill="none"/></svg>
<svg style="left:86px;top:117px" width="1235" height="624" viewBox="86 117 1235 624">
<defs>
<pattern id="pg" patternUnits="userSpaceOnUse" x="0" y="0" width="8" height="8"><rect x="5" y="0" width="1" height="1" fill="#14a014"/><rect x="1" y="4" width="1" height="1" fill="#14a014"/></pattern>
<pattern id="py" patternUnits="userSpaceOnUse" x="0" y="0" width="8" height="8"><rect width="8" height="8" fill="#808000"/><rect x="5" y="0" width="1" height="1" fill="#a6b41e"/><rect x="1" y="4" width="1" height="1" fill="#a6b41e"/></pattern>
<pattern id="pc" patternUnits="userSpaceOnUse" x="0" y="0" width="8" height="8"><rect x="5" y="0" width="1" height="1" fill="#5a8032"/><rect x="1" y="4" width="1" height="1" fill="#5a8032"/></pattern>
<pattern id="pk" patternUnits="userSpaceOnUse" x="2" y="0" width="8" height="4"><rect width="8" height="4" fill="#ffff00"/><rect x="0" y="0" width="4" height="2" fill="#b4b4d8"/><rect x="4" y="2" width="4" height="2" fill="#b4b4d8"/></pattern>
<pattern id="pcg" patternUnits="userSpaceOnUse" x="0" y="0" width="8" height="8"><rect x="5" y="0" width="1" height="1" fill="#58b878"/><rect x="1" y="4" width="1" height="1" fill="#58b878"/></pattern>
<pattern id="pdy" patternUnits="userSpaceOnUse" x="0" y="0" width="8" height="8"><rect x="5" y="0" width="1" height="1" fill="#8a9a2a"/><rect x="1" y="4" width="1" height="1" fill="#8a9a2a"/></pattern>
<clipPath id="cl"><rect x="86" y="117" width="1235" height="624"/></clipPath>
</defs><g clip-path="url(#cl)" shape-rendering="crispEdges">
<circle cx="704" cy="428" r="307.4" fill="none" stroke="#c8c8c8" stroke-width="1"/>
<circle cx="704" cy="428" r="304.4" fill="none" stroke="#f0a060" stroke-width="1"/>
<path d="M 422.8 428 a 281.2 281.2 0 1 0 562.4 0 a 281.2 281.2 0 1 0 -562.4 0 M 458.6 428 a 245.4 245.4 0 1 1 490.8 0 a 245.4 245.4 0 1 1 -490.8 0 Z" fill="url(#pg)" fill-rule="evenodd"/>
<circle cx="704" cy="428" r="281.2" fill="none" stroke="#00ff00" stroke-width="1"/>
<circle cx="704" cy="428" r="281.2" fill="none" stroke="#ffffff" stroke-width="1" stroke-dasharray="7 11" stroke-dashoffset="2"/>
<circle cx="704" cy="428" r="245.4" fill="none" stroke="#ffffff" stroke-width="1"/>
<circle cx="704" cy="428" r="245.4" fill="none" stroke="#00ff00" stroke-width="1" stroke-dasharray="6 12" stroke-dashoffset="5"/>
</g>
<g clip-path="url(#cl)">
<circle cx="704" cy="195" r="71.2" fill="#000"/>
<circle cx="704" cy="195" r="71.2" fill="url(#pc)" stroke="#5e9032" stroke-width="1"/>
<circle cx="704" cy="195" r="65.3" fill="url(#py)"/>
<circle cx="704" cy="428" r="119" fill="#000"/>
<circle cx="704" cy="428" r="119" fill="url(#pc)" stroke="#5e9032" stroke-width="1"/>
<circle cx="704" cy="428" r="113" fill="url(#py)"/>
<circle cx="503" cy="544" r="71" fill="#000"/>
<circle cx="503" cy="544" r="71" fill="url(#pc)" stroke="#5e9032" stroke-width="1"/>
<circle cx="503" cy="544" r="65" fill="url(#py)"/>
<circle cx="906" cy="544" r="71" fill="#000"/>
<circle cx="906" cy="544" r="71" fill="url(#pc)" stroke="#5e9032" stroke-width="1"/>
<circle cx="906" cy="544" r="65.3" fill="url(#pk)"/>
<path d="M893.7 613.9 A71 71 0 1 1 975.9 531.7" fill="none" stroke="#ffffff" stroke-width="1"/>
<circle cx="704" cy="428" r="281.2" fill="none" stroke="#00ff00" stroke-width="1"/>
<circle cx="704" cy="428" r="281.2" fill="none" stroke="#ffffff" stroke-width="1" stroke-dasharray="7 11" stroke-dashoffset="2"/>
<circle cx="704" cy="428" r="245.4" fill="none" stroke="#ffffff" stroke-width="1"/>
<circle cx="704" cy="428" r="245.4" fill="none" stroke="#00ff00" stroke-width="1" stroke-dasharray="6 12" stroke-dashoffset="5"/>
<g transform="translate(543,343) rotate(30)">
<rect x="-24.8" y="-112.5" width="49.6" height="225" fill="url(#pc)" stroke="#6b8e23" stroke-width="1"/>
<rect x="-24.5" y="-71.7" width="49" height="143.4" fill="none" stroke="#40e0d0" stroke-width="1"/>
<circle cx="0" cy="-94" r="13.4" fill="url(#py)"/>
<circle cx="0" cy="94" r="13.4" fill="url(#py)"/>
</g>
<g transform="translate(876,339) rotate(-30)">
<rect x="-29.3" y="-79" width="58.6" height="158" fill="url(#pcg)" stroke="#40e0d0" stroke-width="1"/>
<path d="M-29.3 -71 H29.3 M-29.3 71 H29.3" fill="none" stroke="#40e0d0" stroke-width="1"/>
<circle cx="0" cy="-59" r="13.5" fill="url(#py)"/>
<circle cx="0" cy="59" r="13.5" fill="url(#py)"/>
</g>
<rect x="609.5" y="586.5" width="188" height="39.5" fill="url(#pdy)" stroke="#6b8e23" stroke-width="1"/>
<rect x="661.5" y="588.5" width="84" height="37" fill="none" stroke="#40e0d0" stroke-width="1"/>
<rect x="614" y="592" width="29" height="29" fill="url(#py)"/>
<circle cx="779" cy="607" r="13.6" fill="url(#py)"/>
</g>
</svg>
<svg style="left:86px;top:117px" width="1235" height="624" viewBox="86 117 1235 624">
<defs><clipPath id="cl2"><rect x="86" y="117" width="1235" height="624"/></clipPath></defs><g clip-path="url(#cl2)">
<line x1="496" y1="425" x2="704" y2="428" stroke="#00c0ee" stroke-width="1"/>
<line x1="704" y1="428" x2="629" y2="606" stroke="#00c0ee" stroke-width="1"/>
<line x1="503" y1="544" x2="779" y2="607" stroke="#00c0ee" stroke-width="1"/>
<line x1="779" y1="607" x2="848" y2="573.5" stroke="#00c0ee" stroke-width="1"/>
<line x1="704" y1="195" x2="907" y2="392" stroke="#00c0ee" stroke-width="1"/>
<line x1="590" y1="262" x2="847" y2="288" stroke="#00c0ee" stroke-width="1"/>
<line x1="907" y1="392" x2="906" y2="479" stroke="#00c0ee" stroke-width="1"/>
<line x1="848" y1="573.5" x2="906" y2="544" stroke="#d8f8f0" stroke-width="1" opacity=".7"/>
<line x1="906" y1="479" x2="906" y2="544" stroke="#d8f8f0" stroke-width="1" opacity=".7"/>
<g transform="translate(689,581) rotate(0)"><path transform="translate(0,0) scale(31)" d="M0 0V-1H0.26C0.5 -1 0.58 -0.75 0.58 -0.5C0.58 -0.25 0.5 0 0.26 0Z" fill="none" stroke="#1aa2d8" stroke-width="1.0" vector-effect="non-scaling-stroke"/><path transform="translate(31,0) scale(31)" d="M0.12 -0.84L0.3 -1V0M0.14 0H0.46" fill="none" stroke="#1aa2d8" stroke-width="1.0" vector-effect="non-scaling-stroke"/></g>
<g transform="translate(685,621) rotate(0)"><path transform="translate(0,0) scale(31)" d="M0 0V-1H0.26C0.5 -1 0.58 -0.75 0.58 -0.5C0.58 -0.25 0.5 0 0.26 0Z" fill="none" stroke="#1aa2d8" stroke-width="1.0" vector-effect="non-scaling-stroke"/><path transform="translate(30,0) scale(31)" d="M0.12 -0.84L0.3 -1V0M0.14 0H0.46" fill="none" stroke="#1aa2d8" stroke-width="1.0" vector-effect="non-scaling-stroke"/></g>
<g transform="translate(543,369) rotate(-60)"><path transform="translate(0,0) scale(28)" d="M0 0V-1H0.36C0.62 -1 0.62 -0.76 0.62 -0.74C0.62 -0.5 0.36 -0.5 0.36 -0.5H0M0.34 -0.5L0.64 0" fill="none" stroke="#1aa2d8" stroke-width="1.0" vector-effect="non-scaling-stroke"/><path transform="translate(28,0) scale(28)" d="M0.12 -0.84L0.3 -1V0M0.14 0H0.46" fill="none" stroke="#1aa2d8" stroke-width="1.0" vector-effect="non-scaling-stroke"/></g>
<g transform="translate(586,396) rotate(-60)"><path transform="translate(0,0) scale(28)" d="M0 0V-1H0.36C0.62 -1 0.62 -0.76 0.62 -0.74C0.62 -0.5 0.36 -0.5 0.36 -0.5H0M0.34 -0.5L0.64 0" fill="none" stroke="#1aa2d8" stroke-width="1.0" vector-effect="non-scaling-stroke"/><path transform="translate(28,0) scale(28)" d="M0.12 -0.84L0.3 -1V0M0.14 0H0.46" fill="none" stroke="#1aa2d8" stroke-width="1.0" vector-effect="non-scaling-stroke"/></g>
<g transform="translate(852,322) rotate(60)"><path transform="translate(0,0) scale(28)" d="M0.62 -0.82C0.55 -0.95 0.45 -1 0.32 -1C0.08 -1 0 -0.72 0 -0.5C0 -0.28 0.08 0 0.32 0C0.45 0 0.55 -0.05 0.62 -0.18" fill="none" stroke="#1aa2d8" stroke-width="1.0" vector-effect="non-scaling-stroke"/><path transform="translate(28,0) scale(28)" d="M0.12 -0.84L0.3 -1V0M0.14 0H0.46" fill="none" stroke="#1aa2d8" stroke-width="1.0" vector-effect="non-scaling-stroke"/></g>
<g transform="translate(902,292) rotate(60)"><path transform="translate(0,0) scale(28)" d="M0.62 -0.82C0.55 -0.95 0.45 -1 0.32 -1C0.08 -1 0 -0.72 0 -0.5C0 -0.28 0.08 0 0.32 0C0.45 0 0.55 -0.05 0.62 -0.18" fill="none" stroke="#1aa2d8" stroke-width="1.0" vector-effect="non-scaling-stroke"/><path transform="translate(28,0) scale(28)" d="M0.12 -0.84L0.3 -1V0M0.14 0H0.46" fill="none" stroke="#1aa2d8" stroke-width="1.0" vector-effect="non-scaling-stroke"/></g>
<g transform="translate(765,428) rotate(0)"><path transform="translate(0,0) scale(15)" d="M0.6 -1V-0.3L0.35 0L0.05 -0.3" fill="none" stroke="#80d070" stroke-width="1.0" vector-effect="non-scaling-stroke"/><path transform="translate(11,0) scale(15)" d="M0.12 -0.84L0.3 -1V0M0.14 0H0.46" fill="none" stroke="#80d070" stroke-width="1.0" vector-effect="non-scaling-stroke"/></g>
<g transform="translate(709,422) rotate(0)"><path transform="translate(0,0) scale(12)" d="M0.6 -1V-0.3L0.35 0L0.05 -0.3" fill="none" stroke="#80d070" stroke-width="1.0" vector-effect="non-scaling-stroke"/><path transform="translate(9,0) scale(12)" d="M0.12 -0.84L0.3 -1V0M0.14 0H0.46" fill="none" stroke="#80d070" stroke-width="1.0" vector-effect="non-scaling-stroke"/></g>
<g transform="translate(757,196) rotate(0)"><path transform="translate(0,0) scale(16)" d="M0.6 -1V-0.3L0.35 0L0.05 -0.3" fill="none" stroke="#80c080" stroke-width="1.0" vector-effect="non-scaling-stroke"/><path transform="translate(11,0) scale(16)" d="M0.02 -0.78C0.1 -0.95 0.2 -1 0.32 -1C0.5 -1 0.6 -0.88 0.6 -0.72C0.6 -0.55 0.5 -0.45 0 0H0.62" fill="none" stroke="#80c080" stroke-width="1.0" vector-effect="non-scaling-stroke"/></g>
<g transform="translate(767,190) rotate(0)"><path transform="translate(0,0) scale(14)" d="M0.02 -0.78C0.1 -0.95 0.2 -1 0.32 -1C0.5 -1 0.6 -0.88 0.6 -0.72C0.6 -0.55 0.5 -0.45 0 0H0.62" fill="none" stroke="#1aa2d8" stroke-width="1.0" vector-effect="non-scaling-stroke"/></g>
<g transform="translate(549,541) rotate(0)"><path transform="translate(0,0) scale(16)" d="M0.6 -1V-0.3L0.35 0L0.05 -0.3" fill="none" stroke="#80c080" stroke-width="1.0" vector-effect="non-scaling-stroke"/><path transform="translate(12,0) scale(16)" d="M0.05 -0.9C0.15 -1 0.25 -1 0.32 -1C0.5 -1 0.6 -0.9 0.6 -0.75C0.6 -0.6 0.45 -0.52 0.3 -0.52C0.5 -0.52 0.62 -0.42 0.62 -0.25C0.62 -0.08 0.5 0 0.32 0C0.2 0 0.1 -0.03 0.02 -0.12" fill="none" stroke="#80c080" stroke-width="1.0" vector-effect="non-scaling-stroke"/></g>
<g transform="translate(561,541) rotate(0)"><path transform="translate(0,0) scale(16)" d="M0.05 -0.9C0.15 -1 0.25 -1 0.32 -1C0.5 -1 0.6 -0.9 0.6 -0.75C0.6 -0.6 0.45 -0.52 0.3 -0.52C0.5 -0.52 0.62 -0.42 0.62 -0.25C0.62 -0.08 0.5 0 0.32 0C0.2 0 0.1 -0.03 0.02 -0.12" fill="none" stroke="#1aa2d8" stroke-width="1.0" vector-effect="non-scaling-stroke"/></g>
<g transform="translate(965,537) rotate(0)"><path transform="translate(0,0) scale(14)" d="M0.45 0V-1L0 -0.3H0.62" fill="none" stroke="#1aa2d8" stroke-width="1.0" vector-effect="non-scaling-stroke"/></g>
<g transform="translate(666,196) rotate(0)"><path transform="translate(0,0) scale(12)" d="M0.12 -0.84L0.3 -1V0M0.14 0H0.46" fill="none" stroke="#b8c020" stroke-width="1.0" vector-effect="non-scaling-stroke"/></g>
<g transform="translate(464,544) rotate(0)"><path transform="translate(0,0) scale(12)" d="M0.12 -0.84L0.3 -1V0M0.14 0H0.46" fill="none" stroke="#b8c020" stroke-width="1.0" vector-effect="non-scaling-stroke"/></g>
<g transform="translate(867,545) rotate(0)"><path transform="translate(0,0) scale(12)" d="M0.12 -0.84L0.3 -1V0M0.14 0H0.46" fill="none" stroke="#788a20" stroke-width="1.0" vector-effect="non-scaling-stroke"/></g>
<g transform="translate(623,613) rotate(0)"><path transform="translate(0,0) scale(12)" d="M0.12 -0.84L0.3 -1V0M0.14 0H0.46" fill="none" stroke="#b8c020" stroke-width="1.0" vector-effect="non-scaling-stroke"/></g>
<path d="M584 265 L587 258 L593 265 L596 259" fill="none" stroke="#b8c828" stroke-width="1"/>
<path d="M490 428 L493 421 L499 428 L502 422" fill="none" stroke="#b8c828" stroke-width="1"/>
<path d="M841 291 L844 284 L850 291 L853 285" fill="none" stroke="#b8c828" stroke-width="1"/>
<path d="M901 395 L904 388 L910 395 L913 389" fill="none" stroke="#b8c828" stroke-width="1"/>
<g transform="translate(775,612) rotate(0)"><path transform="translate(0,0) scale(11)" d="M0.02 -0.78C0.1 -0.95 0.2 -1 0.32 -1C0.5 -1 0.6 -0.88 0.6 -0.72C0.6 -0.55 0.5 -0.45 0 0H0.62" fill="none" stroke="#b8c020" stroke-width="1.0" vector-effect="non-scaling-stroke"/></g>
<line x1="703.5" y1="413" x2="703.5" y2="441" stroke="#c8d020" stroke-width="1"/>
<line x1="695" y1="427.5" x2="720" y2="427.5" stroke="#c8d020" stroke-width="1"/>
<circle cx="704" cy="428" r="7" fill="none" stroke="#5a8a40" stroke-width="1"/>
<text x="704" y="435" font-family="Liberation Sans" font-size="22" fill="#d4d0a0" text-anchor="middle">N00106</text>
<text x="703" y="198" font-family="Liberation Sans" font-size="12" fill="#d4d0a0" text-anchor="middle">N00121</text>
<text x="502" y="548" font-family="Liberation Sans" font-size="12" fill="#d4d0a0" text-anchor="middle">N00121</text>
<text x="905" y="548" font-family="Liberation Sans" font-size="12" fill="#f0f0c0" text-anchor="middle">N00121</text>
<path d="M656 150 L649 143 V157 Z" fill="none" stroke="#ff2020" stroke-width="1"/>
<path d="M656 150 L663 143 V157 Z" fill="none" stroke="#ff8020" stroke-width="1"/>
<path d="M485 607 L479 601 V613 Z" fill="none" stroke="#ff2020" stroke-width="1"/>
<path d="M485 607 L491 601 V613 Z" fill="none" stroke="#ff8020" stroke-width="1"/>
<path d="M967 525 L960 518 V532 Z" fill="none" stroke="#ff2020" stroke-width="1"/>
<path d="M967 525 L974 518 V532 Z" fill="none" stroke="#ff8020" stroke-width="1"/>
</g></svg>
<div class="a" style="left:1005px;top:503px;width:227px;height:40px;background:#fff"></div>
<div class="t" style="left:1007px;top:505px;font-size:11px;color:#000">DRC error "Thru Pin to Shape Spacing" &nbsp; Top</div>
<div class="t" style="left:1007px;top:518px;font-size:11px;color:#000">Constraint value: 5 MIL</div>
<div class="t" style="left:1007px;top:531px;font-size:11px;color:#000">Actual value: 0 MIL</div>
<div class="t" style="left:1475px;top:864px;font-size:29px;color:#1656b4;letter-spacing:0.2px;-webkit-text-stroke:0.7px #1656b4">EDA365</div>
<svg style="left:1470px;top:830px" width="130" height="40" viewBox="1470 830 130 40">
<path d="M1488 838.5 H1513.5 L1523 849 H1548 M1498 847 H1510 L1519.5 857.5 H1562 L1566 853" stroke="#1a4aa0" stroke-width="1.6" fill="none"/>
<g fill="none" stroke="#f0a030" stroke-width="3"><circle cx="1483.5" cy="839.5" r="3"/><circle cx="1493.5" cy="847.5" r="3"/><circle cx="1552.5" cy="849.5" r="3"/><circle cx="1568.5" cy="849.5" r="3"/></g></svg>
</body></html>
